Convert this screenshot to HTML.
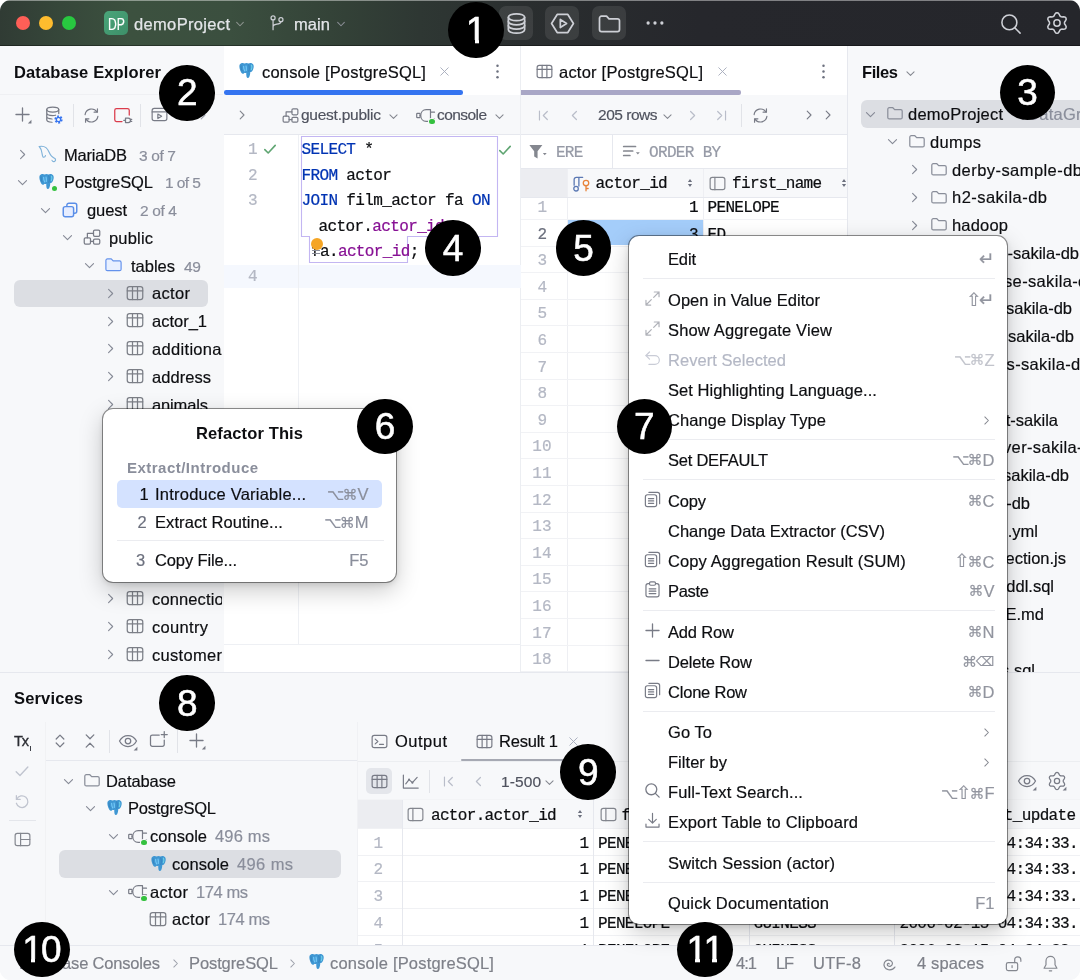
<!DOCTYPE html>
<html lang="en">
<head>
<meta charset="utf-8">
<title>DataGrip - demoProject</title>
<style>
*{box-sizing:border-box;margin:0;padding:0}
html,body{width:1080px;height:980px;overflow:hidden;background:#fff}
body{font-family:"Liberation Sans","DejaVu Sans",sans-serif;position:relative}
#win{position:absolute;left:0;top:0;width:1080px;height:980px;overflow:hidden;border-radius:11px;background:#f7f8fa;will-change:transform}
#win div,#win svg,#win .t{position:absolute}
.t{white-space:pre;display:block}
.s{font-family:"Liberation Sans","DejaVu Sans",sans-serif}
.m{font-family:"Liberation Mono","DejaVu Sans Mono",monospace}
svg{overflow:visible}
.badge{border-radius:50%;background:#000;z-index:50}
.bnum{z-index:51;font-kerning:none;color:#fff;white-space:pre;line-height:40px;font-family:"Liberation Sans","DejaVu Sans",sans-serif;-webkit-text-stroke:.55px #fff}
.bmask{z-index:52;background:#000}
.hl{border-radius:6px}
.menu{background:#fff;border-radius:10px;box-shadow:0 0 0 1px rgba(0,0,0,.42),0 8px 24px rgba(0,0,0,.22),0 2px 6px rgba(0,0,0,.12)}
.sep{background:#ebecf0;height:1px}
.m{-webkit-text-stroke:.22px currentColor}
.k{font-size:15px;margin-left:-1.9px;-webkit-text-stroke:.15px currentColor;position:relative;top:-.5px}
.k2{font-size:18.5px;margin-left:-2.5px;position:relative;top:-.5px;-webkit-text-stroke:.2px currentColor}
.k3{font-size:13px;margin-left:-1px;position:relative;top:-1.5px;-webkit-text-stroke:.2px currentColor}
.s{-webkit-text-stroke:.18px currentColor}
</style>
</head>
<body>
<div id="win">
<div style="left:0px;top:0px;width:1080px;height:46px;background:linear-gradient(90deg,#303b34 0px,#36473a 60px,#3c513f 130px,#3b4f3f 230px,#344338 330px,#2e3733 420px,#2a2e2f 520px,#26272c 700px,#25262b 1080px);"></div>
<div style="left:0px;top:0px;width:1080px;height:1px;background:rgba(255,255,255,.42);"></div>
<div style="left:0px;top:45px;width:1080px;height:1px;background:rgba(0,0,0,.35);"></div>
<div style="left:16px;top:16px;width:14px;height:14px;background:#fe5f57;border-radius:50%;"></div>
<div style="left:39px;top:16px;width:14px;height:14px;background:#febc2e;border-radius:50%;"></div>
<div style="left:62px;top:16px;width:14px;height:14px;background:#28c840;border-radius:50%;"></div>
<div style="left:104px;top:11px;width:24px;height:24px;border-radius:5px;background:linear-gradient(135deg,#4aa57a,#3d8f68);"></div>
<span class="t s" style="top:13.5px;font-size:16px;line-height:21px;color:#fff;left:107.5px;transform:scaleX(.76);transform-origin:0 50%;">DP</span>
<span class="t s" style="top:14px;font-size:16.5px;line-height:21px;color:#e3e5e8;left:134px;letter-spacing:0.34px;-webkit-text-stroke:.25px currentColor;">demoProject</span>
<svg style="left:233px;top:17px;" width="14" height="14" viewBox="0 0 16 16" fill="none"><path d="M4.2 6.2 8 10 11.8 6.2" stroke="#8e9490" stroke-width="1.2" stroke-linecap="round" stroke-linejoin="round"/></svg>
<svg style="left:268px;top:14px;" width="18" height="18" viewBox="0 0 16 16" fill="none"><circle cx="4.5" cy="3.5" r="1.8" stroke="#ced0d6" stroke-width="1.1" stroke-linecap="round" stroke-linejoin="round"/><circle cx="11.5" cy="5" r="1.8" stroke="#ced0d6" stroke-width="1.1" stroke-linecap="round" stroke-linejoin="round"/><path d="M4.5 5.3V14M4.5 11c0-2.6 7-1.2 7-4.2" stroke="#ced0d6" stroke-width="1.1" stroke-linecap="round" stroke-linejoin="round"/></svg>
<span class="t s" style="top:14px;font-size:16.5px;line-height:21px;color:#e3e5e8;left:294px;letter-spacing:0.08px;-webkit-text-stroke:.25px currentColor;">main</span>
<svg style="left:334px;top:17px;" width="14" height="14" viewBox="0 0 16 16" fill="none"><path d="M4.2 6.2 8 10 11.8 6.2" stroke="#8b8e96" stroke-width="1.2" stroke-linecap="round" stroke-linejoin="round"/></svg>
<div style="left:499px;top:6px;width:34px;height:34px;background:rgba(255,255,255,.09);border-radius:7px;"></div>
<svg style="left:503.5px;top:11px;" width="25" height="25" viewBox="0 0 16 16" fill="none"><ellipse cx="8" cy="4" rx="5.2" ry="2.2" stroke="#ced0d6" stroke-width="1.1" stroke-linecap="round" stroke-linejoin="round"/><path d="M2.8 4v8c0 1.2 2.3 2.2 5.2 2.2s5.2-1 5.2-2.2V4" stroke="#ced0d6" stroke-width="1.1" stroke-linecap="round" stroke-linejoin="round"/><path d="M2.8 6.7c0 1.2 2.3 2.2 5.2 2.2s5.2-1 5.2-2.2M2.8 9.4c0 1.2 2.3 2.2 5.2 2.2s5.2-1 5.2-2.2" stroke="#ced0d6" stroke-width="1.1" stroke-linecap="round" stroke-linejoin="round"/></svg>
<div style="left:545px;top:6px;width:34px;height:34px;background:rgba(255,255,255,.09);border-radius:7px;"></div>
<svg style="left:549.5px;top:11px;" width="25" height="25" viewBox="0 0 16 16" fill="none"><path d="M4.6 2.2h6.8L15 8l-3.6 5.8H4.6L1 8z" stroke="#ced0d6" stroke-width="1.1" stroke-linecap="round" stroke-linejoin="round"/><path d="M6.6 5.4 10.6 8 6.6 10.6z" stroke="#ced0d6" stroke-width="1.1" stroke-linecap="round" stroke-linejoin="round"/></svg>
<div style="left:592px;top:6px;width:34px;height:34px;background:rgba(255,255,255,.09);border-radius:7px;"></div>
<svg style="left:596.5px;top:11px;" width="25" height="25" viewBox="0 0 16 16" fill="none"><path d="M1.6 4.6a1.3 1.3 0 0 1 1.3-1.3h3.2l1.6 1.7h5.4a1.3 1.3 0 0 1 1.3 1.3v5.6a1.3 1.3 0 0 1-1.3 1.3H2.9a1.3 1.3 0 0 1-1.3-1.3z" fill="none" stroke="#ced0d6" stroke-width="1.1" stroke-linecap="round" stroke-linejoin="round"/></svg>
<svg style="left:644px;top:12px;" width="22" height="22" viewBox="0 0 16 16" fill="none"><circle cx="3" cy="8" r="1.2" fill="#ced0d6"/><circle cx="8" cy="8" r="1.2" fill="#ced0d6"/><circle cx="13" cy="8" r="1.2" fill="#ced0d6"/></svg>
<svg style="left:997.8px;top:10.8px;" width="26" height="26" viewBox="0 0 16 16" fill="none"><circle cx="7" cy="7" r="4.6" stroke="#ced0d6" stroke-width="0.95" stroke-linecap="round" stroke-linejoin="round"/><path d="M10.400 10.400 13.600 13.600" stroke="#ced0d6" stroke-width="0.95" stroke-linecap="round" stroke-linejoin="round"/></svg>
<svg style="left:1044.7px;top:11.3px;" width="24" height="24" viewBox="0 0 16 16" fill="none"><path d="M8.00 1.15L8.87 1.39L9.53 2.30L9.96 3.26L10.47 3.71L11.12 3.93L12.17 3.83L13.29 3.94L13.93 4.57L14.16 5.45L13.70 6.47L13.08 7.33L12.95 8.00L13.08 8.67L13.70 9.53L14.16 10.55L13.93 11.42L13.29 12.06L12.17 12.17L11.12 12.07L10.47 12.29L9.96 12.74L9.53 13.70L8.87 14.61L8.00 14.85L7.13 14.61L6.47 13.70L6.04 12.74L5.53 12.29L4.88 12.07L3.83 12.17L2.71 12.06L2.07 11.43L1.84 10.55L2.30 9.53L2.92 8.67L3.05 8.00L2.92 7.33L2.30 6.47L1.84 5.45L2.07 4.57L2.71 3.94L3.83 3.83L4.88 3.93L5.52 3.71L6.04 3.26L6.47 2.30L7.13 1.39z" stroke="#ced0d6" stroke-width="1.0" stroke-linecap="round" stroke-linejoin="round"/><circle cx="8" cy="8" r="2.1" stroke="#ced0d6" stroke-width="1.0" stroke-linecap="round" stroke-linejoin="round"/></svg>
<div style="left:0px;top:46px;width:224px;height:626px;background:#f7f8fa;"></div>
<span class="t s" style="top:61.5px;font-size:16.5px;line-height:21px;color:#0d0e11;font-weight:700;-webkit-text-stroke:0;left:14px;letter-spacing:0.13px;">Database Explorer</span>
<div style="left:0px;top:94px;width:223px;height:1px;background:#eff0f3;"></div>
<svg style="left:12.5px;top:104.5px;" width="19" height="19" viewBox="0 0 16 16" fill="none"><path d="M8 2.5V13.5M2.5 8H13.5" stroke="#787b86" stroke-width="1.1" stroke-linecap="round" stroke-linejoin="round"/><path d="M15.5 12.5V15.5H12.5z" fill="#787b86"/></svg>
<svg style="left:44px;top:105px;" width="20" height="20" viewBox="0 0 16 16" fill="none"><ellipse cx="7" cy="3.600" rx="4.800" ry="2" stroke="#787b86" stroke-width="1.0" stroke-linecap="round" stroke-linejoin="round"/><path d="M2.200 3.600v8.200c0 1 1.800 1.900 4.200 2M11.800 3.600v3.200M2.200 6.400c0 1.100 2.100 2 4.800 2 .8 0 1.600-.1 2.200-.2M2.200 9.200c0 1 1.800 1.800 4.200 2" stroke="#787b86" stroke-width="1.0" stroke-linecap="round" stroke-linejoin="round"/><circle cx="11.600" cy="11.600" r="2.600" stroke="#3574f0" stroke-width="1.400" stroke-dasharray="1.500 1.200"/><circle cx="11.600" cy="11.600" r="1.700" stroke="#3574f0" stroke-width="1"/></svg>
<div style="left:73px;top:104px;width:1px;height:23px;background:#e1e3e8;"></div>
<svg style="left:81.5px;top:105.5px;" width="19" height="19" viewBox="0 0 16 16" fill="none"><path d="M2.6 7.2A5.5 5.5 0 0 1 12.6 5M13.4 8.800A5.500 5.500 0 0 1 3.400 11" stroke="#787b86" stroke-width="1.0" stroke-linecap="round" stroke-linejoin="round"/><path d="M13 2.400V5.200H10.200M3 13.600V10.800H5.800" stroke="#787b86" stroke-width="1.0" stroke-linecap="round" stroke-linejoin="round"/></svg>
<svg style="left:112px;top:105px;" width="20" height="20" viewBox="0 0 16 16" fill="none"><path d="M13.800 8V4.200a1.400 1.400 0 0 0-1.400-1.400H3.600a1.400 1.400 0 0 0-1.400 1.400v7.600a1.400 1.400 0 0 0 1.400 1.400H8" stroke="#db3b4b" stroke-width="1.0" stroke-linecap="round" stroke-linejoin="round"/><path d="M9.400 12.200h1.400M10.800 10.400v3.600M10.800 10.400h2.200a1.800 1.800 0 0 1 0 3.600h-2.200M14.800 11.400h1M14.800 13h1" stroke="#787b86" stroke-width="1.0" stroke-linecap="round" stroke-linejoin="round"/></svg>
<div style="left:140px;top:104px;width:1px;height:23px;background:#e1e3e8;"></div>
<svg style="left:150.1px;top:105.3px;" width="19" height="19" viewBox="0 0 16 16" fill="none"><rect x="1.800" y="2.800" width="12.400" height="10.400" rx="1.800" stroke="#787b86" stroke-width="1.0" stroke-linecap="round" stroke-linejoin="round"/><path d="M1.800 5.800H14.200" stroke="#787b86" stroke-width="1.0" stroke-linecap="round" stroke-linejoin="round"/><path d="M6.600 7.600 9.800 9.500 6.600 11.400z" stroke="#787b86" stroke-width="1.0" stroke-linecap="round" stroke-linejoin="round"/></svg>
<svg style="left:195px;top:107px;" width="16" height="16" viewBox="0 0 16 16" fill="none"><path d="M6.2 4.2 10 8 6.2 11.8" stroke="#9da0ab" stroke-width="1.1" stroke-linecap="round" stroke-linejoin="round"/></svg>
<div style="left:0;top:136px;width:222px;height:536px;overflow:hidden">
<div style="left:0;top:-136px;width:222px;height:672px">
<svg style="left:13.5px;top:146px;" width="17" height="17" viewBox="0 0 16 16" fill="none"><path d="M6.2 4.2 10 8 6.2 11.8" stroke="#868a96" stroke-width="1.05" stroke-linecap="round" stroke-linejoin="round"/></svg>
<svg style="left:36.5px;top:143.7px;" width="20" height="20" viewBox="0 0 16 16" fill="none"><path d="M1.800 2C5.400 1.200 8.300 3.200 9.600 6.400c1 2.400 2.400 4.200 5 5.400M14.600 11.800c.4.900.2 1.800-.6 2.200-.9.300-1.700-.2-2-.9" stroke="#7fb2d9" stroke-width="0.9" stroke-linecap="round" stroke-linejoin="round"/><path d="M1.800 2c1.400 1.500 1.900 3.400 2.200 5.400.2 1.500.3 2.600 1 3.200M5 10.600c.9.100 1.600-.4 1.800-1.300" stroke="#7fb2d9" stroke-width="0.9" stroke-linecap="round" stroke-linejoin="round"/></svg>
<span class="t s" style="top:144.5px;font-size:16.5px;line-height:21px;color:#0d0e11;left:64px;letter-spacing:-0.20px;">MariaDB</span>
<span class="t s" style="top:145.5px;font-size:15.5px;line-height:20px;color:#8a8e9b;left:139px;letter-spacing:-0.36px;">3 of 7</span>
<svg style="left:13.5px;top:173.78px;" width="17" height="17" viewBox="0 0 16 16" fill="none"><path d="M4.2 6.2 8 10 11.8 6.2" stroke="#868a96" stroke-width="1.05" stroke-linecap="round" stroke-linejoin="round"/></svg>
<svg style="left:37px;top:172.28px;" width="19" height="19" viewBox="0 0 16 16" fill="none"><path d="M2.200 3.200C3 1.700 5 1.400 6.400 2.200 7.300 1.600 8.700 1.600 9.600 2.200c1.400-.8 3.400-.5 4.200 1 .6 1.200.2 3.400-.8 5-.5.9-1.200 1.300-1.800 1.100-.1 1.600-.3 3.200-1 4.400-.5.9-1.800.8-2.100-.2-.3-1-.3-2.400-.3-3.600-.5.3-1.200.3-1.700 0-.1.600-.700 1-1.400.8C3.200 10.300 1.400 5.200 2.200 3.200z" fill="#3f97d3"/><path d="M5.600 4.600c0 1.400.3 2.800.9 3.800M7.600 4.200c.3 1.200.4 2.600.2 3.800" stroke="#79cdfb" stroke-width="1" stroke-linecap="round" opacity=".9"/><path d="M9.900 3.200c.5 1.600.6 3.800.1 5.600M3.400 4c-.1 1.400.2 3 .8 4.200" stroke="#2c6da3" stroke-width=".7" stroke-linecap="round" opacity=".55"/><path d="M12.200 3.600c.5 1 .4 2.400-.1 3.600" stroke="#6fd3e8" stroke-width="1.100" stroke-linecap="round" opacity=".9"/></svg>
<div style="left:51.7px;top:185.78px;width:5.5px;height:5.5px;background:#35c13f;border-radius:50%;box-shadow:0 0 0 1px #f7f8fa;"></div>
<span class="t s" style="top:172.28px;font-size:16.5px;line-height:21px;color:#0d0e11;left:64px;letter-spacing:-0.10px;">PostgreSQL</span>
<span class="t s" style="top:173.28px;font-size:15.5px;line-height:20px;color:#8a8e9b;left:165px;letter-spacing:-0.56px;">1 of 5</span>
<svg style="left:36.5px;top:201.56px;" width="17" height="17" viewBox="0 0 16 16" fill="none"><path d="M4.2 6.2 8 10 11.8 6.2" stroke="#868a96" stroke-width="1.05" stroke-linecap="round" stroke-linejoin="round"/></svg>
<svg style="left:60.5px;top:201.06px;" width="18" height="18" viewBox="0 0 16 16" fill="none"><rect x="2" y="5" width="9.200" height="9" rx="1.800" fill="#e6edff" stroke="#5a8ee8" stroke-width="1.3" stroke-linecap="round" stroke-linejoin="round"/><path d="M5.200 4.600V3.800A1.800 1.800 0 0 1 7 2H12.200A1.800 1.800 0 0 1 14 3.800V9A1.800 1.800 0 0 1 12.200 10.800H11.600" stroke="#5a8ee8" stroke-width="1.3" stroke-linecap="round" stroke-linejoin="round"/></svg>
<span class="t s" style="top:200.06px;font-size:16.5px;line-height:21px;color:#0d0e11;left:87px;letter-spacing:-0.09px;">guest</span>
<span class="t s" style="top:201.06px;font-size:15.5px;line-height:20px;color:#8a8e9b;left:140px;letter-spacing:-0.36px;">2 of 4</span>
<svg style="left:58.5px;top:229.34px;" width="17" height="17" viewBox="0 0 16 16" fill="none"><path d="M4.2 6.2 8 10 11.8 6.2" stroke="#868a96" stroke-width="1.05" stroke-linecap="round" stroke-linejoin="round"/></svg>
<svg style="left:81.5px;top:227.04px;" width="20" height="20" viewBox="0 0 16 16" fill="none"><rect x="1.800" y="8.600" width="5" height="5" rx="1" stroke="#787b86" stroke-width="1.0" stroke-linecap="round" stroke-linejoin="round"/><rect x="9.200" y="2.400" width="5" height="5" rx="1" stroke="#787b86" stroke-width="1.0" stroke-linecap="round" stroke-linejoin="round"/><rect x="9.200" y="9.600" width="5" height="4" rx="1" stroke="#787b86" stroke-width="1.0" stroke-linecap="round" stroke-linejoin="round"/><path d="M4.300 8.600V5h4.900M6.800 11.400h2.400" stroke="#787b86" stroke-width="1.0" stroke-linecap="round" stroke-linejoin="round"/></svg>
<span class="t s" style="top:227.84px;font-size:16.5px;line-height:21px;color:#0d0e11;left:109px;letter-spacing:0.17px;">public</span>
<svg style="left:80.5px;top:257.12px;" width="17" height="17" viewBox="0 0 16 16" fill="none"><path d="M4.2 6.2 8 10 11.8 6.2" stroke="#868a96" stroke-width="1.05" stroke-linecap="round" stroke-linejoin="round"/></svg>
<svg style="left:104px;top:255.32px;" width="19" height="19" viewBox="0 0 16 16" fill="none"><path d="M1.6 4.6a1.3 1.3 0 0 1 1.3-1.3h3.2l1.6 1.7h5.4a1.3 1.3 0 0 1 1.3 1.3v5.6a1.3 1.3 0 0 1-1.3 1.3H2.9a1.3 1.3 0 0 1-1.3-1.3z" fill="#e8f0ff" stroke="#6492ec" stroke-width="1.0" stroke-linecap="round" stroke-linejoin="round"/></svg>
<span class="t s" style="top:255.62px;font-size:16.5px;line-height:21px;color:#0d0e11;left:131px;letter-spacing:-0.01px;">tables</span>
<span class="t s" style="top:256.62px;font-size:15.5px;line-height:20px;color:#8a8e9b;left:184px;letter-spacing:-0.25px;">49</span>
<div style="left:14px;top:280px;width:194px;height:27px;background:#dcdee3;border-radius:6px;"></div>
<svg style="left:101.5px;top:284.9px;" width="17" height="17" viewBox="0 0 16 16" fill="none"><path d="M6.2 4.2 10 8 6.2 11.8" stroke="#868a96" stroke-width="1.05" stroke-linecap="round" stroke-linejoin="round"/></svg>
<svg style="left:124.5px;top:282.6px;" width="20" height="20" viewBox="0 0 16 16" fill="none"><rect x="1.8" y="2.8" width="12.4" height="10.4" rx="1.8" stroke="#7c7f87" stroke-width="1.0" stroke-linecap="round" stroke-linejoin="round"/><path d="M1.8 6.2H14.2M6 2.8V13.2M10 2.8V13.2" stroke="#7c7f87" stroke-width="1.0" stroke-linecap="round" stroke-linejoin="round"/></svg>
<span class="t s" style="top:283.4px;font-size:16.5px;line-height:21px;color:#0d0e11;left:152px;letter-spacing:0.33px;">actor</span>
<svg style="left:101.5px;top:312.68px;" width="17" height="17" viewBox="0 0 16 16" fill="none"><path d="M6.2 4.2 10 8 6.2 11.8" stroke="#868a96" stroke-width="1.05" stroke-linecap="round" stroke-linejoin="round"/></svg>
<svg style="left:124.5px;top:310.38px;" width="20" height="20" viewBox="0 0 16 16" fill="none"><rect x="1.8" y="2.8" width="12.4" height="10.4" rx="1.8" stroke="#7c7f87" stroke-width="1.0" stroke-linecap="round" stroke-linejoin="round"/><path d="M1.8 6.2H14.2M6 2.8V13.2M10 2.8V13.2" stroke="#7c7f87" stroke-width="1.0" stroke-linecap="round" stroke-linejoin="round"/></svg>
<span class="t s" style="top:311.18px;font-size:16.5px;line-height:21px;color:#0d0e11;left:152px;letter-spacing:-0.01px;">actor_1</span>
<svg style="left:101.5px;top:340.46px;" width="17" height="17" viewBox="0 0 16 16" fill="none"><path d="M6.2 4.2 10 8 6.2 11.8" stroke="#868a96" stroke-width="1.05" stroke-linecap="round" stroke-linejoin="round"/></svg>
<svg style="left:124.5px;top:338.16px;" width="20" height="20" viewBox="0 0 16 16" fill="none"><rect x="1.8" y="2.8" width="12.4" height="10.4" rx="1.8" stroke="#7c7f87" stroke-width="1.0" stroke-linecap="round" stroke-linejoin="round"/><path d="M1.8 6.2H14.2M6 2.8V13.2M10 2.8V13.2" stroke="#7c7f87" stroke-width="1.0" stroke-linecap="round" stroke-linejoin="round"/></svg>
<span class="t s" style="top:338.96px;font-size:16.5px;line-height:21px;color:#0d0e11;left:152px;letter-spacing:0.32px;">additional</span>
<svg style="left:101.5px;top:368.24px;" width="17" height="17" viewBox="0 0 16 16" fill="none"><path d="M6.2 4.2 10 8 6.2 11.8" stroke="#868a96" stroke-width="1.05" stroke-linecap="round" stroke-linejoin="round"/></svg>
<svg style="left:124.5px;top:365.94px;" width="20" height="20" viewBox="0 0 16 16" fill="none"><rect x="1.8" y="2.8" width="12.4" height="10.4" rx="1.8" stroke="#7c7f87" stroke-width="1.0" stroke-linecap="round" stroke-linejoin="round"/><path d="M1.8 6.2H14.2M6 2.8V13.2M10 2.8V13.2" stroke="#7c7f87" stroke-width="1.0" stroke-linecap="round" stroke-linejoin="round"/></svg>
<span class="t s" style="top:366.74px;font-size:16.5px;line-height:21px;color:#0d0e11;left:152px;letter-spacing:0.05px;">address</span>
<svg style="left:101.5px;top:396.02px;" width="17" height="17" viewBox="0 0 16 16" fill="none"><path d="M6.2 4.2 10 8 6.2 11.8" stroke="#868a96" stroke-width="1.05" stroke-linecap="round" stroke-linejoin="round"/></svg>
<svg style="left:124.5px;top:393.72px;" width="20" height="20" viewBox="0 0 16 16" fill="none"><rect x="1.8" y="2.8" width="12.4" height="10.4" rx="1.8" stroke="#7c7f87" stroke-width="1.0" stroke-linecap="round" stroke-linejoin="round"/><path d="M1.8 6.2H14.2M6 2.8V13.2M10 2.8V13.2" stroke="#7c7f87" stroke-width="1.0" stroke-linecap="round" stroke-linejoin="round"/></svg>
<span class="t s" style="top:394.52px;font-size:16.5px;line-height:21px;color:#0d0e11;left:152px;letter-spacing:-0.14px;">animals</span>
<svg style="left:101.5px;top:590.48px;" width="17" height="17" viewBox="0 0 16 16" fill="none"><path d="M6.2 4.2 10 8 6.2 11.8" stroke="#868a96" stroke-width="1.05" stroke-linecap="round" stroke-linejoin="round"/></svg>
<svg style="left:124.5px;top:588.18px;" width="20" height="20" viewBox="0 0 16 16" fill="none"><rect x="1.8" y="2.8" width="12.4" height="10.4" rx="1.8" stroke="#7c7f87" stroke-width="1.0" stroke-linecap="round" stroke-linejoin="round"/><path d="M1.8 6.2H14.2M6 2.8V13.2M10 2.8V13.2" stroke="#7c7f87" stroke-width="1.0" stroke-linecap="round" stroke-linejoin="round"/></svg>
<span class="t s" style="top:588.98px;font-size:16.5px;line-height:21px;color:#0d0e11;left:152px;letter-spacing:0.13px;">connection</span>
<svg style="left:101.5px;top:618.26px;" width="17" height="17" viewBox="0 0 16 16" fill="none"><path d="M6.2 4.2 10 8 6.2 11.8" stroke="#868a96" stroke-width="1.05" stroke-linecap="round" stroke-linejoin="round"/></svg>
<svg style="left:124.5px;top:615.96px;" width="20" height="20" viewBox="0 0 16 16" fill="none"><rect x="1.8" y="2.8" width="12.4" height="10.4" rx="1.8" stroke="#7c7f87" stroke-width="1.0" stroke-linecap="round" stroke-linejoin="round"/><path d="M1.8 6.2H14.2M6 2.8V13.2M10 2.8V13.2" stroke="#7c7f87" stroke-width="1.0" stroke-linecap="round" stroke-linejoin="round"/></svg>
<span class="t s" style="top:616.76px;font-size:16.5px;line-height:21px;color:#0d0e11;left:152px;letter-spacing:0.32px;">country</span>
<svg style="left:101.5px;top:646.04px;" width="17" height="17" viewBox="0 0 16 16" fill="none"><path d="M6.2 4.2 10 8 6.2 11.8" stroke="#868a96" stroke-width="1.05" stroke-linecap="round" stroke-linejoin="round"/></svg>
<svg style="left:124.5px;top:643.74px;" width="20" height="20" viewBox="0 0 16 16" fill="none"><rect x="1.8" y="2.8" width="12.4" height="10.4" rx="1.8" stroke="#7c7f87" stroke-width="1.0" stroke-linecap="round" stroke-linejoin="round"/><path d="M1.8 6.2H14.2M6 2.8V13.2M10 2.8V13.2" stroke="#7c7f87" stroke-width="1.0" stroke-linecap="round" stroke-linejoin="round"/></svg>
<span class="t s" style="top:644.54px;font-size:16.5px;line-height:21px;color:#0d0e11;left:152px;letter-spacing:0.31px;">customer</span>
</div></div>
<div style="left:223.5px;top:46px;width:297px;height:626px;background:#fff;"></div>
<div style="left:223.5px;top:95px;width:297px;height:40px;background:#f7f8fa;"></div>
<div style="left:223.5px;top:134px;width:297px;height:1px;background:#e6e8ee;"></div>
<div style="left:520px;top:46px;width:1px;height:626px;background:#eceef2;"></div>
<svg style="left:236.5px;top:60.5px;" width="19" height="19" viewBox="0 0 16 16" fill="none"><path d="M2.200 3.200C3 1.700 5 1.400 6.400 2.200 7.300 1.600 8.700 1.600 9.600 2.200c1.400-.8 3.400-.5 4.200 1 .6 1.200.2 3.400-.8 5-.5.9-1.200 1.300-1.800 1.100-.1 1.600-.3 3.200-1 4.400-.5.9-1.800.8-2.100-.2-.3-1-.3-2.400-.3-3.600-.5.3-1.200.3-1.700 0-.1.600-.700 1-1.400.8C3.200 10.300 1.400 5.200 2.200 3.200z" fill="#3f97d3"/><path d="M5.600 4.600c0 1.400.3 2.800.9 3.800M7.600 4.200c.3 1.200.4 2.600.2 3.800" stroke="#79cdfb" stroke-width="1" stroke-linecap="round" opacity=".9"/><path d="M9.900 3.200c.5 1.600.6 3.800.1 5.600M3.400 4c-.1 1.400.2 3 .8 4.200" stroke="#2c6da3" stroke-width=".7" stroke-linecap="round" opacity=".55"/><path d="M12.200 3.600c.5 1 .4 2.400-.1 3.600" stroke="#6fd3e8" stroke-width="1.100" stroke-linecap="round" opacity=".9"/></svg>
<span class="t s" style="top:61.5px;font-size:16.5px;line-height:21px;color:#0d0e11;left:262px;letter-spacing:0.18px;">console [PostgreSQL]</span>
<svg style="left:436.5px;top:63.5px;" width="15" height="15" viewBox="0 0 16 16" fill="none"><path d="M4 4 12 12M12 4 4 12" stroke="#a8adbd" stroke-width="1.0" stroke-linecap="round" stroke-linejoin="round"/></svg>
<svg style="left:487.5px;top:61.5px;" width="19" height="19" viewBox="0 0 16 16" fill="none"><circle cx="8" cy="3.2" r="1.05" fill="#6c707e"/><circle cx="8" cy="8" r="1.05" fill="#6c707e"/><circle cx="8" cy="12.8" r="1.05" fill="#6c707e"/></svg>
<div style="left:224px;top:90px;width:239px;height:4.5px;background:#3574f0;border-radius:2.25px;"></div>
<svg style="left:234px;top:107px;" width="16" height="16" viewBox="0 0 16 16" fill="none"><path d="M6.2 4.2 10 8 6.2 11.8" stroke="#84878f" stroke-width="1.1" stroke-linecap="round" stroke-linejoin="round"/></svg>
<svg style="left:280.5px;top:105.5px;" width="19" height="19" viewBox="0 0 16 16" fill="none"><rect x="1.800" y="8.600" width="5" height="5" rx="1" stroke="#787b86" stroke-width="1.0" stroke-linecap="round" stroke-linejoin="round"/><rect x="9.200" y="2.400" width="5" height="5" rx="1" stroke="#787b86" stroke-width="1.0" stroke-linecap="round" stroke-linejoin="round"/><rect x="9.200" y="9.600" width="5" height="4" rx="1" stroke="#787b86" stroke-width="1.0" stroke-linecap="round" stroke-linejoin="round"/><path d="M4.300 8.600V5h4.900M6.800 11.400h2.400" stroke="#787b86" stroke-width="1.0" stroke-linecap="round" stroke-linejoin="round"/></svg>
<span class="t s" style="top:105px;font-size:15.5px;line-height:20px;color:#4f525e;left:301px;letter-spacing:-0.25px;">guest.public</span>
<svg style="left:385.5px;top:108.5px;" width="15" height="15" viewBox="0 0 16 16" fill="none"><path d="M4.2 6.2 8 10 11.8 6.2" stroke="#84878f" stroke-width="1.1" stroke-linecap="round" stroke-linejoin="round"/></svg>
<svg style="left:415.5px;top:106px;" width="19" height="19" viewBox="0 0 16 16" fill="none"><rect x=".6" y="6.200" width="2.800" height="3.600" rx=".5" stroke="#787b86" stroke-width="1.0" stroke-linecap="round" stroke-linejoin="round"/><path d="M3.400 8H4M8.600 3H12.200V13H8.600C5.800 13 4 10.800 4 8S5.800 3 8.600 3zM12.200 5.200H15.600M12.200 10.800H15.600" stroke="#787b86" stroke-width="1.0" stroke-linecap="round" stroke-linejoin="round"/></svg>
<div style="left:429.3px;top:118.9px;width:5.5px;height:5.5px;background:#35c13f;border-radius:50%;box-shadow:0 0 0 1px #f7f8fa;"></div>
<span class="t s" style="top:105px;font-size:15.5px;line-height:20px;color:#4f525e;left:437px;letter-spacing:-0.57px;">console</span>
<svg style="left:491.5px;top:108.5px;" width="15" height="15" viewBox="0 0 16 16" fill="none"><path d="M4.2 6.2 8 10 11.8 6.2" stroke="#84878f" stroke-width="1.1" stroke-linecap="round" stroke-linejoin="round"/></svg>
<div style="left:223.5px;top:264.5px;width:297px;height:23.5px;background:#f5f8fe;"></div>
<div style="left:298px;top:135px;width:1px;height:509px;background:#eef0f4;"></div>
<div style="left:223.5px;top:644px;width:297px;height:1px;background:#eef0f4;"></div>
<svg style="left:0;top:0" width="1080" height="980" viewBox="0 0 1080 980" fill="none"><path d="M301.500 136.500H497.500V236.500H407.500V262.500H309.500V236.500H301.500z" fill="#fff" stroke="#c3b6f2" stroke-width="1.100"/></svg>
<span class="t m" style="top:140px;font-size:16px;line-height:21px;color:#b4b8c4;left:248px;letter-spacing:-0.61px;">1</span>
<span class="t m" style="top:165.5px;font-size:16px;line-height:21px;color:#b4b8c4;left:248px;letter-spacing:-0.61px;">2</span>
<span class="t m" style="top:191px;font-size:16px;line-height:21px;color:#b4b8c4;left:248px;letter-spacing:-0.61px;">3</span>
<span class="t m" style="top:267px;font-size:16px;line-height:21px;color:#b4b8c4;left:248px;letter-spacing:-0.61px;">4</span>
<svg style="left:262px;top:141px;" width="16" height="16" viewBox="0 0 16 16" fill="none"><path d="M2.800 8.600 6.200 12 13.200 4.400" stroke="#5fa572" stroke-width="1.6" stroke-linecap="round" stroke-linejoin="round"/></svg>
<svg style="left:497px;top:142px;" width="16" height="16" viewBox="0 0 16 16" fill="none"><path d="M2.800 8.600 6.200 12 13.200 4.400" stroke="#5fa572" stroke-width="1.6" stroke-linecap="round" stroke-linejoin="round"/></svg>
<span class="t m" style="top:140px;font-size:16px;line-height:21px;color:#0033b3;left:301.5px;letter-spacing:-0.63px;">SELECT</span>
<span class="t m" style="top:140px;font-size:16px;line-height:21px;color:#0d0e11;left:355.32px;letter-spacing:-0.63px;"> *</span>
<span class="t m" style="top:165.5px;font-size:16px;line-height:21px;color:#0033b3;left:301.5px;letter-spacing:-0.63px;">FROM</span>
<span class="t m" style="top:165.5px;font-size:16px;line-height:21px;color:#0d0e11;left:337.38px;letter-spacing:-0.63px;"> actor</span>
<span class="t m" style="top:191px;font-size:16px;line-height:21px;color:#0033b3;left:301.5px;letter-spacing:-0.63px;">JOIN</span>
<span class="t m" style="top:191px;font-size:16px;line-height:21px;color:#0d0e11;left:337.38px;letter-spacing:-0.63px;"> film_actor fa </span>
<span class="t m" style="top:191px;font-size:16px;line-height:21px;color:#0033b3;left:471.93px;letter-spacing:-0.63px;">ON</span>
<span class="t m" style="top:216.5px;font-size:16px;line-height:21px;color:#0d0e11;left:318.5px;letter-spacing:-0.63px;">actor.</span>
<span class="t m" style="top:216.5px;font-size:16px;line-height:21px;color:#871094;left:372.32px;letter-spacing:-0.63px;">actor_id</span>
<span class="t m" style="top:216.5px;font-size:16px;line-height:21px;color:#0d0e11;left:444.08px;letter-spacing:-0.63px;"> =</span>
<span class="t m" style="top:242px;font-size:16px;line-height:21px;color:#0d0e11;left:311px;letter-spacing:-0.63px;">fa.</span>
<span class="t m" style="top:242px;font-size:16px;line-height:21px;color:#871094;left:337.91px;letter-spacing:-0.63px;">actor_id</span>
<span class="t m" style="top:242px;font-size:16px;line-height:21px;color:#0d0e11;left:409.67px;letter-spacing:-0.64px;">;</span>
<div style="left:310.5px;top:237.5px;width:12px;height:12px;background:#f5a524;border-radius:50%;"></div>
<div style="left:312px;top:249.5px;width:8px;height:1.5px;background:#8a8e9b;"></div>
<div style="left:312px;top:252.5px;width:8px;height:1.5px;background:#8a8e9b;"></div>
<div style="left:521px;top:46px;width:326px;height:626px;background:#fff;"></div>
<div style="left:521px;top:95px;width:326px;height:40px;background:#f7f8fa;"></div>
<div style="left:521px;top:134px;width:326px;height:1px;background:#e6e8ee;"></div>
<div style="left:847px;top:46px;width:1px;height:626px;background:#e6e8ee;"></div>
<svg style="left:534.5px;top:61.5px;" width="19" height="19" viewBox="0 0 16 16" fill="none"><rect x="1.8" y="2.8" width="12.4" height="10.4" rx="1.8" stroke="#787b86" stroke-width="1.0" stroke-linecap="round" stroke-linejoin="round"/><path d="M1.8 6.2H14.2M6 2.8V13.2M10 2.8V13.2" stroke="#787b86" stroke-width="1.0" stroke-linecap="round" stroke-linejoin="round"/></svg>
<span class="t s" style="top:61.5px;font-size:16.5px;line-height:21px;color:#0d0e11;left:559px;letter-spacing:0.22px;">actor [PostgreSQL]</span>
<svg style="left:714.5px;top:63.5px;" width="15" height="15" viewBox="0 0 16 16" fill="none"><path d="M4 4 12 12M12 4 4 12" stroke="#a8adbd" stroke-width="1.0" stroke-linecap="round" stroke-linejoin="round"/></svg>
<svg style="left:813.5px;top:61.5px;" width="19" height="19" viewBox="0 0 16 16" fill="none"><circle cx="8" cy="3.2" r="1.05" fill="#6c707e"/><circle cx="8" cy="8" r="1.05" fill="#6c707e"/><circle cx="8" cy="12.8" r="1.05" fill="#6c707e"/></svg>
<div style="left:521px;top:90px;width:220px;height:4.5px;background:#a9a7c6;border-radius:0 2px 2px 0;"></div>
<svg style="left:534.5px;top:106.5px;" width="17" height="17" viewBox="0 0 16 16" fill="none"><path d="M4.200 3.800V12.200M11.600 4.200 7.800 8 11.600 11.800" stroke="#b9bdc9" stroke-width="1.1" stroke-linecap="round" stroke-linejoin="round"/></svg>
<svg style="left:565.5px;top:106.5px;" width="17" height="17" viewBox="0 0 16 16" fill="none"><path d="M9.8 4.2 6 8 9.8 11.8" stroke="#b9bdc9" stroke-width="1.1" stroke-linecap="round" stroke-linejoin="round"/></svg>
<span class="t s" style="top:105px;font-size:15.5px;line-height:20px;color:#4f525e;left:598px;letter-spacing:-0.49px;">205 rows</span>
<svg style="left:659.5px;top:108.5px;" width="15" height="15" viewBox="0 0 16 16" fill="none"><path d="M4.2 6.2 8 10 11.8 6.2" stroke="#84878f" stroke-width="1.1" stroke-linecap="round" stroke-linejoin="round"/></svg>
<svg style="left:683.5px;top:106.5px;" width="17" height="17" viewBox="0 0 16 16" fill="none"><path d="M6.2 4.2 10 8 6.2 11.8" stroke="#b9bdc9" stroke-width="1.1" stroke-linecap="round" stroke-linejoin="round"/></svg>
<svg style="left:712.5px;top:106.5px;" width="17" height="17" viewBox="0 0 16 16" fill="none"><path d="M11.800 3.800V12.200M4.400 4.200 8.200 8 4.400 11.800" stroke="#b9bdc9" stroke-width="1.1" stroke-linecap="round" stroke-linejoin="round"/></svg>
<div style="left:741px;top:104px;width:1px;height:23px;background:#e1e3e8;"></div>
<svg style="left:750.5px;top:105.5px;" width="19" height="19" viewBox="0 0 16 16" fill="none"><path d="M2.6 7.2A5.5 5.5 0 0 1 12.6 5M13.4 8.800A5.500 5.500 0 0 1 3.400 11" stroke="#787b86" stroke-width="1.0" stroke-linecap="round" stroke-linejoin="round"/><path d="M13 2.400V5.200H10.200M3 13.600V10.800H5.800" stroke="#787b86" stroke-width="1.0" stroke-linecap="round" stroke-linejoin="round"/></svg>
<svg style="left:800.5px;top:107px;" width="16" height="16" viewBox="0 0 16 16" fill="none"><path d="M6.2 4.2 10 8 6.2 11.8" stroke="#787b86" stroke-width="1.1" stroke-linecap="round" stroke-linejoin="round"/></svg>
<svg style="left:819.5px;top:107px;" width="16" height="16" viewBox="0 0 16 16" fill="none"><path d="M6.2 4.2 10 8 6.2 11.8" stroke="#787b86" stroke-width="1.1" stroke-linecap="round" stroke-linejoin="round"/></svg>
<svg style="left:528px;top:142.5px;" width="18" height="18" viewBox="0 0 16 16" fill="none"><path d="M1.200 1.800h11.600l-4.300 5.600v6.400l-3-1.800V7.400z" fill="#84878f"/><path d="M13.200 8.800h3.400l-1.700 2z" fill="#84878f"/></svg>
<span class="t m" style="top:142.5px;font-size:16px;line-height:21px;color:#969aa6;left:556px;letter-spacing:-0.77px;">ERE</span>
<div style="left:612px;top:135px;width:1px;height:33px;background:#e6e8ee;"></div>
<svg style="left:622px;top:142px;" width="18" height="18" viewBox="0 0 16 16" fill="none"><path d="M1.500 4h10.500M1.500 8h8M1.500 12h5.500" stroke="#84878f" stroke-width="1.5" stroke-linecap="round" stroke-linejoin="round"/><path d="M12.400 9.200h3.400l-1.700 2z" fill="#84878f"/></svg>
<span class="t m" style="top:142.5px;font-size:16px;line-height:21px;color:#969aa6;left:649px;letter-spacing:-0.66px;">ORDER BY</span>
<div style="left:521px;top:168px;width:326px;height:1px;background:#e6e8ee;"></div>
<div style="left:521px;top:169px;width:326px;height:29px;background:#f7f8fa;"></div>
<div style="left:521px;top:169px;width:46px;height:29px;background:#ecedf1;"></div>
<svg style="left:571.5px;top:173.5px;" width="19" height="19" viewBox="0 0 16 16" fill="none"><path d="M9 2.800H3.600a1.800 1.800 0 0 0-1.800 1.800v4.800M5.800 2.800v7.400" stroke="#5b78b3" stroke-width="1.1" stroke-linecap="round" stroke-linejoin="round"/><circle cx="3.400" cy="12.400" r="1.900" stroke="#5b78b3" stroke-width="1.1" stroke-linecap="round" stroke-linejoin="round"/><circle cx="11.800" cy="7.600" r="2.300" stroke="#e8833a" stroke-width="1.1" stroke-linecap="round" stroke-linejoin="round"/><path d="M11.800 9.900v4.300M11.800 12.200h1.800" stroke="#e8833a" stroke-width="1.1" stroke-linecap="round" stroke-linejoin="round"/></svg>
<span class="t m" style="top:174px;font-size:16px;line-height:21px;color:#0d0e11;left:595.5px;letter-spacing:-0.66px;">actor_id</span>
<svg style="left:683px;top:176px;" width="14" height="14" viewBox="0 0 16 16" fill="none"><path d="M8 3.500 10.400 6.800H5.600zM8 12.500 5.600 9.200h4.800z" fill="#6c707e"/></svg>
<div style="left:703px;top:169px;width:1px;height:503px;background:#eeeff3;"></div>
<svg style="left:707.5px;top:173.5px;" width="19" height="19" viewBox="0 0 16 16" fill="none"><rect x="1.8" y="2.8" width="12.4" height="10.4" rx="1.8" stroke="#84878f" stroke-width="1.0" stroke-linecap="round" stroke-linejoin="round"/><path d="M5.8 2.8V13.2" stroke="#84878f" stroke-width="1.0" stroke-linecap="round" stroke-linejoin="round"/></svg>
<span class="t m" style="top:174px;font-size:16px;line-height:21px;color:#0d0e11;left:732px;letter-spacing:-0.65px;">first_name</span>
<svg style="left:837px;top:176px;" width="14" height="14" viewBox="0 0 16 16" fill="none"><path d="M8 3.500 10.400 6.800H5.600zM8 12.500 5.600 9.200h4.800z" fill="#6c707e"/></svg>
<div style="left:567px;top:169px;width:1px;height:503px;background:#eeeff3;"></div>
<div style="left:521px;top:197px;width:326px;height:1px;background:#e6e8ee;"></div>
<div style="left:568px;top:220px;width:135px;height:25px;background:#a4cdfa;"></div>
<span class="t m" style="top:198px;font-size:16px;line-height:21px;color:#b4b8c4;right:533px;">1</span>
<div style="left:521px;top:219px;width:326px;height:1px;background:#f1f2f5;"></div>
<span class="t m" style="top:224.6px;font-size:16px;line-height:21px;color:#6c707e;right:533px;">2</span>
<div style="left:521px;top:246px;width:326px;height:1px;background:#f1f2f5;"></div>
<span class="t m" style="top:251.2px;font-size:16px;line-height:21px;color:#b4b8c4;right:533px;">3</span>
<div style="left:521px;top:272px;width:326px;height:1px;background:#f1f2f5;"></div>
<span class="t m" style="top:277.8px;font-size:16px;line-height:21px;color:#b4b8c4;right:533px;">4</span>
<div style="left:521px;top:299px;width:326px;height:1px;background:#f1f2f5;"></div>
<span class="t m" style="top:304.4px;font-size:16px;line-height:21px;color:#b4b8c4;right:533px;">5</span>
<div style="left:521px;top:325px;width:326px;height:1px;background:#f1f2f5;"></div>
<span class="t m" style="top:331px;font-size:16px;line-height:21px;color:#b4b8c4;right:533px;">6</span>
<div style="left:521px;top:352px;width:326px;height:1px;background:#f1f2f5;"></div>
<span class="t m" style="top:357.6px;font-size:16px;line-height:21px;color:#b4b8c4;right:533px;">7</span>
<div style="left:521px;top:379px;width:326px;height:1px;background:#f1f2f5;"></div>
<span class="t m" style="top:384.2px;font-size:16px;line-height:21px;color:#b4b8c4;right:533px;">8</span>
<div style="left:521px;top:405px;width:326px;height:1px;background:#f1f2f5;"></div>
<span class="t m" style="top:410.8px;font-size:16px;line-height:21px;color:#b4b8c4;right:533px;">9</span>
<div style="left:521px;top:432px;width:326px;height:1px;background:#f1f2f5;"></div>
<span class="t m" style="top:437.4px;font-size:16px;line-height:21px;color:#b4b8c4;right:528.5px;">10</span>
<div style="left:521px;top:458px;width:326px;height:1px;background:#f1f2f5;"></div>
<span class="t m" style="top:464px;font-size:16px;line-height:21px;color:#b4b8c4;right:528.5px;">11</span>
<div style="left:521px;top:485px;width:326px;height:1px;background:#f1f2f5;"></div>
<span class="t m" style="top:490.6px;font-size:16px;line-height:21px;color:#b4b8c4;right:528.5px;">12</span>
<div style="left:521px;top:512px;width:326px;height:1px;background:#f1f2f5;"></div>
<span class="t m" style="top:517.2px;font-size:16px;line-height:21px;color:#b4b8c4;right:528.5px;">13</span>
<div style="left:521px;top:538px;width:326px;height:1px;background:#f1f2f5;"></div>
<span class="t m" style="top:543.8px;font-size:16px;line-height:21px;color:#b4b8c4;right:528.5px;">14</span>
<div style="left:521px;top:565px;width:326px;height:1px;background:#f1f2f5;"></div>
<span class="t m" style="top:570.4px;font-size:16px;line-height:21px;color:#b4b8c4;right:528.5px;">15</span>
<div style="left:521px;top:591px;width:326px;height:1px;background:#f1f2f5;"></div>
<span class="t m" style="top:597px;font-size:16px;line-height:21px;color:#b4b8c4;right:528.5px;">16</span>
<div style="left:521px;top:618px;width:326px;height:1px;background:#f1f2f5;"></div>
<span class="t m" style="top:623.6px;font-size:16px;line-height:21px;color:#b4b8c4;right:528.5px;">17</span>
<div style="left:521px;top:645px;width:326px;height:1px;background:#f1f2f5;"></div>
<span class="t m" style="top:650.2px;font-size:16px;line-height:21px;color:#b4b8c4;right:528.5px;">18</span>
<div style="left:521px;top:671px;width:326px;height:1px;background:#f1f2f5;"></div>
<span class="t m" style="top:198px;font-size:16px;line-height:21px;color:#0d0e11;right:381.5px;">1</span>
<span class="t m" style="top:198px;font-size:16px;line-height:21px;color:#0d0e11;left:707.5px;letter-spacing:-0.66px;">PENELOPE</span>
<span class="t m" style="top:224.5px;font-size:16px;line-height:21px;color:#0d0e11;right:381.5px;">3</span>
<span class="t m" style="top:224.5px;font-size:16px;line-height:21px;color:#0d0e11;left:707.5px;letter-spacing:-0.60px;">ED</span>
<div style="left:848px;top:46px;width:232px;height:626px;background:#f7f8fa;"></div>
<span class="t s" style="top:61.5px;font-size:16.5px;line-height:21px;color:#0d0e11;font-weight:700;-webkit-text-stroke:0;left:862px;letter-spacing:-0.40px;">Files</span>
<svg style="left:902.5px;top:65.5px;" width="15" height="15" viewBox="0 0 16 16" fill="none"><path d="M4.2 6.2 8 10 11.8 6.2" stroke="#84878f" stroke-width="1.1" stroke-linecap="round" stroke-linejoin="round"/></svg>
<div style="left:861px;top:100px;width:230px;height:28px;background:#dcdee3;border-radius:6px;"></div>
<svg style="left:861.5px;top:105.5px;" width="17" height="17" viewBox="0 0 16 16" fill="none"><path d="M4.2 6.2 8 10 11.8 6.2" stroke="#868a96" stroke-width="1.05" stroke-linecap="round" stroke-linejoin="round"/></svg>
<svg style="left:885.5px;top:104.3px;" width="18" height="18" viewBox="0 0 16 16" fill="none"><path d="M1.6 4.6a1.3 1.3 0 0 1 1.3-1.3h3.2l1.6 1.7h5.4a1.3 1.3 0 0 1 1.3 1.3v5.6a1.3 1.3 0 0 1-1.3 1.3H2.9a1.3 1.3 0 0 1-1.3-1.3z" fill="none" stroke="#8a8e9a" stroke-width="1.1" stroke-linecap="round" stroke-linejoin="round"/></svg>
<span class="t s" style="top:104px;font-size:16.5px;line-height:21px;color:#0d0e11;left:908px;letter-spacing:0.24px;">demoProject</span>
<span class="t s" style="top:104px;font-size:16.5px;line-height:21px;color:#8a8e9b;left:1012.5px;letter-spacing:0.23px;">~/DataGr</span>
<svg style="left:884px;top:133.28px;" width="17" height="17" viewBox="0 0 16 16" fill="none"><path d="M4.2 6.2 8 10 11.8 6.2" stroke="#868a96" stroke-width="1.05" stroke-linecap="round" stroke-linejoin="round"/></svg>
<svg style="left:908px;top:132.08px;" width="18" height="18" viewBox="0 0 16 16" fill="none"><path d="M1.6 4.6a1.3 1.3 0 0 1 1.3-1.3h3.2l1.6 1.7h5.4a1.3 1.3 0 0 1 1.3 1.3v5.6a1.3 1.3 0 0 1-1.3 1.3H2.9a1.3 1.3 0 0 1-1.3-1.3z" fill="none" stroke="#8a8e9a" stroke-width="1.1" stroke-linecap="round" stroke-linejoin="round"/></svg>
<span class="t s" style="top:131.78px;font-size:16.5px;line-height:21px;color:#0d0e11;left:930px;letter-spacing:0.37px;">dumps</span>
<svg style="left:905.5px;top:161.06px;" width="17" height="17" viewBox="0 0 16 16" fill="none"><path d="M6.2 4.2 10 8 6.2 11.8" stroke="#868a96" stroke-width="1.05" stroke-linecap="round" stroke-linejoin="round"/></svg>
<svg style="left:929.5px;top:159.86px;" width="18" height="18" viewBox="0 0 16 16" fill="none"><path d="M1.6 4.6a1.3 1.3 0 0 1 1.3-1.3h3.2l1.6 1.7h5.4a1.3 1.3 0 0 1 1.3 1.3v5.6a1.3 1.3 0 0 1-1.3 1.3H2.9a1.3 1.3 0 0 1-1.3-1.3z" fill="none" stroke="#8a8e9a" stroke-width="1.1" stroke-linecap="round" stroke-linejoin="round"/></svg>
<span class="t s" style="top:159.56px;font-size:16.5px;line-height:21px;color:#0d0e11;left:952px;letter-spacing:0.44px;">derby-sample-db</span>
<svg style="left:905.5px;top:188.84px;" width="17" height="17" viewBox="0 0 16 16" fill="none"><path d="M6.2 4.2 10 8 6.2 11.8" stroke="#868a96" stroke-width="1.05" stroke-linecap="round" stroke-linejoin="round"/></svg>
<svg style="left:929.5px;top:187.64px;" width="18" height="18" viewBox="0 0 16 16" fill="none"><path d="M1.6 4.6a1.3 1.3 0 0 1 1.3-1.3h3.2l1.6 1.7h5.4a1.3 1.3 0 0 1 1.3 1.3v5.6a1.3 1.3 0 0 1-1.3 1.3H2.9a1.3 1.3 0 0 1-1.3-1.3z" fill="none" stroke="#8a8e9a" stroke-width="1.1" stroke-linecap="round" stroke-linejoin="round"/></svg>
<span class="t s" style="top:187.34px;font-size:16.5px;line-height:21px;color:#0d0e11;left:952px;letter-spacing:0.46px;">h2-sakila-db</span>
<svg style="left:905.5px;top:216.62px;" width="17" height="17" viewBox="0 0 16 16" fill="none"><path d="M6.2 4.2 10 8 6.2 11.8" stroke="#868a96" stroke-width="1.05" stroke-linecap="round" stroke-linejoin="round"/></svg>
<svg style="left:929.5px;top:215.42px;" width="18" height="18" viewBox="0 0 16 16" fill="none"><path d="M1.6 4.6a1.3 1.3 0 0 1 1.3-1.3h3.2l1.6 1.7h5.4a1.3 1.3 0 0 1 1.3 1.3v5.6a1.3 1.3 0 0 1-1.3 1.3H2.9a1.3 1.3 0 0 1-1.3-1.3z" fill="none" stroke="#8a8e9a" stroke-width="1.1" stroke-linecap="round" stroke-linejoin="round"/></svg>
<span class="t s" style="top:215.12px;font-size:16.5px;line-height:21px;color:#0d0e11;left:952px;letter-spacing:0.19px;">hadoop</span>
<span class="t s" style="top:242.9px;font-size:16.5px;line-height:21px;color:#0d0e11;right:1px;">-sakila-db</span>
<span class="t s" style="top:298.46px;font-size:16.5px;line-height:21px;color:#0d0e11;right:8px;">sakila-db</span>
<span class="t s" style="top:326.24px;font-size:16.5px;line-height:21px;color:#0d0e11;right:6px;">sakila-db</span>
<span class="t s" style="top:409.58px;font-size:16.5px;line-height:21px;color:#0d0e11;right:22px;">t-sakila</span>
<span class="t s" style="top:465.14px;font-size:16.5px;line-height:21px;color:#0d0e11;right:11px;">sakila-db</span>
<span class="t s" style="top:492.92px;font-size:16.5px;line-height:21px;color:#0d0e11;right:50px;">-db</span>
<span class="t s" style="top:520.7px;font-size:16.5px;line-height:21px;color:#0d0e11;right:42px;">e.yml</span>
<span class="t s" style="top:548.48px;font-size:16.5px;line-height:21px;color:#0d0e11;right:14px;">lection.js</span>
<span class="t s" style="top:576.26px;font-size:16.5px;line-height:21px;color:#0d0e11;right:26px;">-ddl.sql</span>
<span class="t s" style="top:604.04px;font-size:16.5px;line-height:21px;color:#0d0e11;right:36px;">ME.md</span>
<span class="t s" style="top:270.68px;font-size:16.5px;line-height:21px;color:#0d0e11;left:1004px;letter-spacing:.35px;">se-sakila-db</span>
<span class="t s" style="top:354.02px;font-size:16.5px;line-height:21px;color:#0d0e11;left:997px;letter-spacing:.35px;">es-sakila-db</span>
<span class="t s" style="top:437.36px;font-size:16.5px;line-height:21px;color:#0d0e11;left:1003px;letter-spacing:.35px;">ver-sakila-db</span>
<div style="left:848px;top:650px;width:232px;height:22px;overflow:hidden">
<span class="t s" style="top:9.5px;font-size:16.5px;line-height:21px;color:#0d0e11;right:45px;right:45px;">s.sql</span>
</div>
<div style="left:0px;top:672px;width:1080px;height:273px;background:#f7f8fa;"></div>
<div style="left:0px;top:672px;width:1080px;height:1px;background:#e6e8ee;"></div>
<span class="t s" style="top:687.5px;font-size:16.5px;line-height:21px;color:#0d0e11;font-weight:700;-webkit-text-stroke:0;left:14px;letter-spacing:0.16px;">Services</span>
<span class="t s" style="top:732px;font-size:14.5px;line-height:19px;color:#2b2d33;left:14px;letter-spacing:-1.11px;-webkit-text-stroke:.35px currentColor;">Tx</span>
<div style="left:29.5px;top:746px;width:1.3px;height:5px;background:#3d4048;"></div>
<svg style="left:13px;top:762px;" width="18" height="18" viewBox="0 0 16 16" fill="none"><path d="M2.800 8.600 6.200 12 13.200 4.400" stroke="#c0c4cf" stroke-width="1.2" stroke-linecap="round" stroke-linejoin="round"/></svg>
<svg style="left:13px;top:792px;" width="18" height="18" viewBox="0 0 16 16" fill="none"><path d="M3 3.200V6.600H6.400" stroke="#c0c4cf" stroke-width="1.1" stroke-linecap="round" stroke-linejoin="round"/><path d="M3.300 6.400A5.200 5.200 0 1 1 3 10" stroke="#c0c4cf" stroke-width="1.1" stroke-linecap="round" stroke-linejoin="round"/></svg>
<div style="left:9px;top:820px;width:27px;height:1px;background:#e4e6eb;"></div>
<svg style="left:12.5px;top:830px;" width="19" height="19" viewBox="0 0 16 16" fill="none"><rect x="1.800" y="2.800" width="12.400" height="10.400" rx="1.800" stroke="#84878f" stroke-width="1.0" stroke-linecap="round" stroke-linejoin="round"/><path d="M6.400 2.800V13.200M6.400 8H14.200" stroke="#84878f" stroke-width="1.0" stroke-linecap="round" stroke-linejoin="round"/></svg>
<div style="left:45px;top:722px;width:1px;height:223px;background:#f1f2f4;"></div>
<svg style="left:51px;top:732px;" width="18" height="18" viewBox="0 0 16 16" fill="none"><path d="M4.600 6.200 8 2.800 11.400 6.200M4.600 9.800 8 13.200 11.400 9.800" stroke="#787b86" stroke-width="1.1" stroke-linecap="round" stroke-linejoin="round"/></svg>
<svg style="left:81px;top:732px;" width="18" height="18" viewBox="0 0 16 16" fill="none"><path d="M4.600 2.600 8 6 11.400 2.600M4.600 13.400 8 10 11.400 13.400" stroke="#787b86" stroke-width="1.1" stroke-linecap="round" stroke-linejoin="round"/></svg>
<div style="left:109px;top:730px;width:1px;height:23px;background:#e1e3e8;"></div>
<svg style="left:118px;top:731px;" width="20" height="20" viewBox="0 0 16 16" fill="none"><path d="M1.200 8C2.800 5 5.200 3.600 8 3.600S13.200 5 14.800 8C13.200 11 10.800 12.400 8 12.400S2.800 11 1.200 8z" stroke="#787b86" stroke-width="1.0" stroke-linecap="round" stroke-linejoin="round"/><circle cx="8" cy="8" r="2.200" stroke="#787b86" stroke-width="1.0" stroke-linecap="round" stroke-linejoin="round"/><path d="M15.5 12.5V15.5H12.5z" fill="#787b86"/></svg>
<svg style="left:148px;top:730px;" width="20" height="20" viewBox="0 0 16 16" fill="none"><path d="M9 4H3.400A1.400 1.400 0 0 0 2 5.400v6.200A1.400 1.400 0 0 0 3.400 13h8.200a1.400 1.400 0 0 0 1.400-1.400V8" stroke="#787b86" stroke-width="1.0" stroke-linecap="round" stroke-linejoin="round"/><path d="M13 1.200V6M10.600 3.600h4.800" stroke="#787b86" stroke-width="1.0" stroke-linecap="round" stroke-linejoin="round"/></svg>
<div style="left:177px;top:730px;width:1px;height:23px;background:#e1e3e8;"></div>
<svg style="left:186.5px;top:730.5px;" width="19" height="19" viewBox="0 0 16 16" fill="none"><path d="M8 2.5V13.5M2.5 8H13.5" stroke="#787b86" stroke-width="1.1" stroke-linecap="round" stroke-linejoin="round"/><path d="M15.5 12.5V15.5H12.5z" fill="#787b86"/></svg>
<div style="left:46px;top:760px;width:311px;height:1px;background:#e6e8ee;"></div>
<div style="left:357px;top:722px;width:1px;height:223px;background:#f0f1f4;"></div>
<div style="left:59px;top:850px;width:282px;height:28px;background:#dcdee3;border-radius:6px;"></div>
<svg style="left:59.5px;top:772.5px;" width="17" height="17" viewBox="0 0 16 16" fill="none"><path d="M4.2 6.2 8 10 11.8 6.2" stroke="#868a96" stroke-width="1.05" stroke-linecap="round" stroke-linejoin="round"/></svg>
<svg style="left:83px;top:770.8px;" width="18" height="18" viewBox="0 0 16 16" fill="none"><path d="M1.6 4.6a1.3 1.3 0 0 1 1.3-1.3h3.2l1.6 1.7h5.4a1.3 1.3 0 0 1 1.3 1.3v5.6a1.3 1.3 0 0 1-1.3 1.3H2.9a1.3 1.3 0 0 1-1.3-1.3z" fill="none" stroke="#8a8e9a" stroke-width="1.1" stroke-linecap="round" stroke-linejoin="round"/></svg>
<span class="t s" style="top:770.5px;font-size:16.5px;line-height:21px;color:#0d0e11;left:106px;letter-spacing:-0.09px;">Database</span>
<svg style="left:81.5px;top:800.28px;" width="17" height="17" viewBox="0 0 16 16" fill="none"><path d="M4.2 6.2 8 10 11.8 6.2" stroke="#868a96" stroke-width="1.05" stroke-linecap="round" stroke-linejoin="round"/></svg>
<svg style="left:104.5px;top:798.28px;" width="19" height="19" viewBox="0 0 16 16" fill="none"><path d="M2.200 3.200C3 1.700 5 1.400 6.400 2.200 7.300 1.600 8.700 1.600 9.600 2.200c1.400-.8 3.400-.5 4.200 1 .6 1.200.2 3.400-.8 5-.5.9-1.200 1.300-1.800 1.100-.1 1.600-.3 3.200-1 4.400-.5.9-1.800.8-2.100-.2-.3-1-.3-2.400-.3-3.600-.5.3-1.200.3-1.700 0-.1.600-.700 1-1.400.8C3.200 10.300 1.400 5.200 2.200 3.200z" fill="#3f97d3"/><path d="M5.600 4.600c0 1.400.3 2.800.9 3.800M7.600 4.200c.3 1.200.4 2.600.2 3.800" stroke="#79cdfb" stroke-width="1" stroke-linecap="round" opacity=".9"/><path d="M9.900 3.200c.5 1.600.6 3.800.1 5.600M3.400 4c-.1 1.400.2 3 .8 4.200" stroke="#2c6da3" stroke-width=".7" stroke-linecap="round" opacity=".55"/><path d="M12.200 3.600c.5 1 .4 2.400-.1 3.600" stroke="#6fd3e8" stroke-width="1.100" stroke-linecap="round" opacity=".9"/></svg>
<span class="t s" style="top:798.28px;font-size:16.5px;line-height:21px;color:#0d0e11;left:128px;letter-spacing:-0.21px;">PostgreSQL</span>
<svg style="left:104.5px;top:828.06px;" width="17" height="17" viewBox="0 0 16 16" fill="none"><path d="M4.2 6.2 8 10 11.8 6.2" stroke="#868a96" stroke-width="1.05" stroke-linecap="round" stroke-linejoin="round"/></svg>
<svg style="left:127.5px;top:826.56px;" width="19" height="19" viewBox="0 0 16 16" fill="none"><rect x=".6" y="6.200" width="2.800" height="3.600" rx=".5" stroke="#787b86" stroke-width="1.0" stroke-linecap="round" stroke-linejoin="round"/><path d="M3.400 8H4M8.600 3H12.200V13H8.600C5.800 13 4 10.800 4 8S5.800 3 8.600 3zM12.200 5.200H15.600M12.200 10.800H15.600" stroke="#787b86" stroke-width="1.0" stroke-linecap="round" stroke-linejoin="round"/></svg>
<div style="left:141.3px;top:839.9599999999999px;width:5.5px;height:5.5px;background:#35c13f;border-radius:50%;box-shadow:0 0 0 1px #f7f8fa;"></div>
<span class="t s" style="top:826.06px;font-size:16.5px;line-height:21px;color:#0d0e11;left:150px;letter-spacing:0.02px;">console</span>
<span class="t s" style="top:826.06px;font-size:16.5px;line-height:21px;color:#8a8e9b;left:215px;letter-spacing:0.18px;">496 ms</span>
<svg style="left:148.5px;top:853.84px;" width="19" height="19" viewBox="0 0 16 16" fill="none"><path d="M2.200 3.200C3 1.700 5 1.400 6.400 2.200 7.300 1.600 8.700 1.600 9.600 2.200c1.400-.8 3.400-.5 4.200 1 .6 1.200.2 3.400-.8 5-.5.9-1.200 1.300-1.800 1.100-.1 1.600-.3 3.200-1 4.400-.5.9-1.800.8-2.100-.2-.3-1-.3-2.400-.3-3.600-.5.3-1.200.3-1.700 0-.1.600-.700 1-1.400.8C3.200 10.300 1.400 5.200 2.200 3.200z" fill="#3f97d3"/><path d="M5.600 4.600c0 1.400.3 2.800.9 3.800M7.600 4.200c.3 1.200.4 2.600.2 3.800" stroke="#79cdfb" stroke-width="1" stroke-linecap="round" opacity=".9"/><path d="M9.900 3.200c.5 1.600.6 3.800.1 5.600M3.400 4c-.1 1.400.2 3 .8 4.200" stroke="#2c6da3" stroke-width=".7" stroke-linecap="round" opacity=".55"/><path d="M12.200 3.600c.5 1 .4 2.400-.1 3.600" stroke="#6fd3e8" stroke-width="1.100" stroke-linecap="round" opacity=".9"/></svg>
<span class="t s" style="top:853.84px;font-size:16.5px;line-height:21px;color:#0d0e11;left:172px;letter-spacing:0.02px;">console</span>
<span class="t s" style="top:853.84px;font-size:16.5px;line-height:21px;color:#8a8e9b;left:237px;letter-spacing:0.38px;">496 ms</span>
<svg style="left:104.5px;top:883.62px;" width="17" height="17" viewBox="0 0 16 16" fill="none"><path d="M4.2 6.2 8 10 11.8 6.2" stroke="#868a96" stroke-width="1.05" stroke-linecap="round" stroke-linejoin="round"/></svg>
<svg style="left:127.5px;top:882.12px;" width="19" height="19" viewBox="0 0 16 16" fill="none"><rect x=".6" y="6.200" width="2.800" height="3.600" rx=".5" stroke="#787b86" stroke-width="1.0" stroke-linecap="round" stroke-linejoin="round"/><path d="M3.400 8H4M8.600 3H12.200V13H8.600C5.800 13 4 10.800 4 8S5.800 3 8.600 3zM12.200 5.200H15.600M12.200 10.800H15.600" stroke="#787b86" stroke-width="1.0" stroke-linecap="round" stroke-linejoin="round"/></svg>
<div style="left:141.3px;top:895.52px;width:5.5px;height:5.5px;background:#35c13f;border-radius:50%;box-shadow:0 0 0 1px #f7f8fa;"></div>
<span class="t s" style="top:881.62px;font-size:16.5px;line-height:21px;color:#0d0e11;left:150px;letter-spacing:0.33px;">actor</span>
<span class="t s" style="top:881.62px;font-size:16.5px;line-height:21px;color:#8a8e9b;left:196px;letter-spacing:-0.42px;">174 ms</span>
<svg style="left:148px;top:908.9px;" width="20" height="20" viewBox="0 0 16 16" fill="none"><rect x="1.8" y="2.8" width="12.4" height="10.4" rx="1.8" stroke="#7c7f87" stroke-width="1.0" stroke-linecap="round" stroke-linejoin="round"/><path d="M1.8 6.2H14.2M6 2.8V13.2M10 2.8V13.2" stroke="#7c7f87" stroke-width="1.0" stroke-linecap="round" stroke-linejoin="round"/></svg>
<span class="t s" style="top:909.4px;font-size:16.5px;line-height:21px;color:#0d0e11;left:172px;letter-spacing:0.33px;">actor</span>
<span class="t s" style="top:909.4px;font-size:16.5px;line-height:21px;color:#8a8e9b;left:218px;letter-spacing:-0.42px;">174 ms</span>
<div style="left:358px;top:722px;width:722px;height:223px;background:#f7f8fa;"></div>
<svg style="left:369.5px;top:731.5px;" width="19" height="19" viewBox="0 0 16 16" fill="none"><rect x="1.800" y="2.800" width="12.400" height="10.400" rx="1.800" stroke="#787b86" stroke-width="1.0" stroke-linecap="round" stroke-linejoin="round"/><path d="M4.400 6 6.600 8 4.400 10M8 10.400h3.400" stroke="#787b86" stroke-width="1.0" stroke-linecap="round" stroke-linejoin="round"/></svg>
<span class="t s" style="top:731px;font-size:16.5px;line-height:21px;color:#0d0e11;left:395px;letter-spacing:0.49px;">Output</span>
<svg style="left:474.5px;top:731.5px;" width="19" height="19" viewBox="0 0 16 16" fill="none"><rect x="1.8" y="2.8" width="12.4" height="10.4" rx="1.8" stroke="#787b86" stroke-width="1.0" stroke-linecap="round" stroke-linejoin="round"/><path d="M1.8 6.2H14.2M6 2.8V13.2M10 2.8V13.2" stroke="#787b86" stroke-width="1.0" stroke-linecap="round" stroke-linejoin="round"/></svg>
<span class="t s" style="top:731px;font-size:16.5px;line-height:21px;color:#0d0e11;left:499px;letter-spacing:-0.22px;">Result 1</span>
<svg style="left:565.5px;top:733.5px;" width="15" height="15" viewBox="0 0 16 16" fill="none"><path d="M4 4 12 12M12 4 4 12" stroke="#a8adbd" stroke-width="1.0" stroke-linecap="round" stroke-linejoin="round"/></svg>
<div style="left:461px;top:758.5px;width:121px;height:2.5px;background:#a6a9b3;border-radius:1.5px;"></div>
<div style="left:358px;top:761px;width:722px;height:1px;background:#eceef1;"></div>
<div style="left:366px;top:768px;width:26px;height:26px;background:#e4e6eb;border-radius:5px;"></div>
<svg style="left:369.5px;top:771.5px;" width="19" height="19" viewBox="0 0 16 16" fill="none"><rect x="1.8" y="2.8" width="12.4" height="10.4" rx="1.8" stroke="#787b86" stroke-width="1.0" stroke-linecap="round" stroke-linejoin="round"/><path d="M1.8 6.2H14.2M6 2.8V13.2M10 2.8V13.2" stroke="#787b86" stroke-width="1.0" stroke-linecap="round" stroke-linejoin="round"/></svg>
<svg style="left:400.5px;top:771.5px;" width="19" height="19" viewBox="0 0 16 16" fill="none"><path d="M2 2.500V13.500H14.500" stroke="#787b86" stroke-width="1.0" stroke-linecap="round" stroke-linejoin="round"/><path d="M4 10 6.800 6.400 9.600 9 13.600 4.600" stroke="#787b86" stroke-width="1.0" stroke-linecap="round" stroke-linejoin="round"/><circle cx="6.800" cy="6.400" r=".9" fill="#787b86"/><circle cx="9.600" cy="9" r=".9" fill="#787b86"/></svg>
<div style="left:429px;top:770px;width:1px;height:23px;background:#e1e3e8;"></div>
<svg style="left:439.5px;top:772.5px;" width="17" height="17" viewBox="0 0 16 16" fill="none"><path d="M4.200 3.800V12.200M11.600 4.200 7.800 8 11.600 11.800" stroke="#b9bdc9" stroke-width="1.1" stroke-linecap="round" stroke-linejoin="round"/></svg>
<svg style="left:469.5px;top:772.5px;" width="17" height="17" viewBox="0 0 16 16" fill="none"><path d="M9.8 4.2 6 8 9.8 11.8" stroke="#b9bdc9" stroke-width="1.1" stroke-linecap="round" stroke-linejoin="round"/></svg>
<span class="t s" style="top:771.5px;font-size:15.5px;line-height:20px;color:#4f525e;left:501px;letter-spacing:0.09px;">1-500</span>
<svg style="left:541.5px;top:774.5px;" width="15" height="15" viewBox="0 0 16 16" fill="none"><path d="M4.2 6.2 8 10 11.8 6.2" stroke="#84878f" stroke-width="1.1" stroke-linecap="round" stroke-linejoin="round"/></svg>
<svg style="left:1017px;top:771px;" width="20" height="20" viewBox="0 0 16 16" fill="none"><path d="M1.200 8C2.800 5 5.200 3.600 8 3.600S13.200 5 14.800 8C13.200 11 10.800 12.400 8 12.400S2.800 11 1.200 8z" stroke="#787b86" stroke-width="1.0" stroke-linecap="round" stroke-linejoin="round"/><circle cx="8" cy="8" r="2.200" stroke="#787b86" stroke-width="1.0" stroke-linecap="round" stroke-linejoin="round"/><path d="M15.5 12.5V15.5H12.5z" fill="#787b86"/></svg>
<svg style="left:1047px;top:771px;" width="20" height="20" viewBox="0 0 16 16" fill="none"><path d="M8.00 1.15L8.87 1.39L9.53 2.30L9.96 3.26L10.47 3.71L11.12 3.93L12.17 3.83L13.29 3.94L13.93 4.57L14.16 5.45L13.70 6.47L13.08 7.33L12.95 8.00L13.08 8.67L13.70 9.53L14.16 10.55L13.93 11.42L13.29 12.06L12.17 12.17L11.12 12.07L10.47 12.29L9.96 12.74L9.53 13.70L8.87 14.61L8.00 14.85L7.13 14.61L6.47 13.70L6.04 12.74L5.53 12.29L4.88 12.07L3.83 12.17L2.71 12.06L2.07 11.43L1.84 10.55L2.30 9.53L2.92 8.67L3.05 8.00L2.92 7.33L2.30 6.47L1.84 5.45L2.07 4.57L2.71 3.94L3.83 3.83L4.88 3.93L5.52 3.71L6.04 3.26L6.47 2.30L7.13 1.39z" stroke="#787b86" stroke-width="1.0" stroke-linecap="round" stroke-linejoin="round"/><circle cx="8" cy="8" r="2.1" stroke="#787b86" stroke-width="1.0" stroke-linecap="round" stroke-linejoin="round"/><path d="M15.5 12.5V15.5H12.5z" fill="#787b86"/></svg>
<div style="left:358px;top:800px;width:722px;height:28px;background:#f7f8fa;"></div>
<div style="left:358px;top:800px;width:44px;height:28px;background:#ecedf1;"></div>
<div style="left:358px;top:799px;width:722px;height:1px;background:#f3f4f6;"></div>
<div style="left:358px;top:828px;width:722px;height:117px;background:#fff;"></div>
<svg style="left:405.5px;top:804.5px;" width="19" height="19" viewBox="0 0 16 16" fill="none"><rect x="1.8" y="2.8" width="12.4" height="10.4" rx="1.8" stroke="#84878f" stroke-width="1.0" stroke-linecap="round" stroke-linejoin="round"/><path d="M5.8 2.8V13.2" stroke="#84878f" stroke-width="1.0" stroke-linecap="round" stroke-linejoin="round"/></svg>
<span class="t m" style="top:805.5px;font-size:16px;line-height:21px;color:#0d0e11;left:431px;letter-spacing:-0.67px;">actor.actor_id</span>
<svg style="left:573px;top:807px;" width="14" height="14" viewBox="0 0 16 16" fill="none"><path d="M8 3.500 10.400 6.800H5.600zM8 12.500 5.600 9.200h4.800z" fill="#6c707e"/></svg>
<svg style="left:598.5px;top:804.5px;" width="19" height="19" viewBox="0 0 16 16" fill="none"><rect x="1.8" y="2.8" width="12.4" height="10.4" rx="1.8" stroke="#84878f" stroke-width="1.0" stroke-linecap="round" stroke-linejoin="round"/><path d="M5.8 2.8V13.2" stroke="#84878f" stroke-width="1.0" stroke-linecap="round" stroke-linejoin="round"/></svg>
<span class="t m" style="top:805.5px;font-size:16px;line-height:21px;color:#0d0e11;left:621.5px;letter-spacing:-0.63px;">first_name</span>
<span class="t m" style="top:805.5px;font-size:16px;line-height:21px;color:#0d0e11;left:977px;letter-spacing:-0.65px;">last_update</span>
<div style="left:358px;top:828px;width:722px;height:1px;background:#f0f1f4;"></div>
<div style="left:358px;top:855px;width:722px;height:1px;background:#f0f1f4;"></div>
<div style="left:358px;top:881px;width:722px;height:1px;background:#f0f1f4;"></div>
<div style="left:358px;top:908px;width:722px;height:1px;background:#f0f1f4;"></div>
<div style="left:358px;top:935px;width:722px;height:1px;background:#f0f1f4;"></div>
<span class="t m" style="top:833.5px;font-size:16px;line-height:21px;color:#b4b8c4;right:697px;">1</span>
<span class="t m" style="top:833.5px;font-size:16px;line-height:21px;color:#0d0e11;right:491px;">1</span>
<span class="t m" style="top:833.5px;font-size:16px;line-height:21px;color:#0d0e11;left:598px;letter-spacing:-0.66px;">PENELOPE</span>
<span class="t m" style="top:833.5px;font-size:16px;line-height:21px;color:#0d0e11;left:753.5px;letter-spacing:-0.67px;">GUINESS</span>
<span class="t m" style="top:833.5px;font-size:16px;line-height:21px;color:#0d0e11;left:899.5px;letter-spacing:-0.68px;">2006-02-15 04:34:33.</span>
<span class="t m" style="top:860.2px;font-size:16px;line-height:21px;color:#b4b8c4;right:697px;">2</span>
<span class="t m" style="top:860.2px;font-size:16px;line-height:21px;color:#0d0e11;right:491px;">1</span>
<span class="t m" style="top:860.2px;font-size:16px;line-height:21px;color:#0d0e11;left:598px;letter-spacing:-0.66px;">PENELOPE</span>
<span class="t m" style="top:860.2px;font-size:16px;line-height:21px;color:#0d0e11;left:753.5px;letter-spacing:-0.67px;">GUINESS</span>
<span class="t m" style="top:860.2px;font-size:16px;line-height:21px;color:#0d0e11;left:899.5px;letter-spacing:-0.68px;">2006-02-15 04:34:33.</span>
<span class="t m" style="top:886.9px;font-size:16px;line-height:21px;color:#b4b8c4;right:697px;">3</span>
<span class="t m" style="top:886.9px;font-size:16px;line-height:21px;color:#0d0e11;right:491px;">1</span>
<span class="t m" style="top:886.9px;font-size:16px;line-height:21px;color:#0d0e11;left:598px;letter-spacing:-0.66px;">PENELOPE</span>
<span class="t m" style="top:886.9px;font-size:16px;line-height:21px;color:#0d0e11;left:753.5px;letter-spacing:-0.67px;">GUINESS</span>
<span class="t m" style="top:886.9px;font-size:16px;line-height:21px;color:#0d0e11;left:899.5px;letter-spacing:-0.68px;">2006-02-15 04:34:33.</span>
<span class="t m" style="top:913.6px;font-size:16px;line-height:21px;color:#b4b8c4;right:697px;">4</span>
<span class="t m" style="top:913.6px;font-size:16px;line-height:21px;color:#0d0e11;right:491px;">1</span>
<span class="t m" style="top:913.6px;font-size:16px;line-height:21px;color:#0d0e11;left:598px;letter-spacing:-0.66px;">PENELOPE</span>
<span class="t m" style="top:913.6px;font-size:16px;line-height:21px;color:#0d0e11;left:753.5px;letter-spacing:-0.67px;">GUINESS</span>
<span class="t m" style="top:913.6px;font-size:16px;line-height:21px;color:#0d0e11;left:899.5px;letter-spacing:-0.68px;">2006-02-15 04:34:33.</span>
<div style="left:402px;top:800px;width:1px;height:145px;background:#e6e8ee;"></div>
<div style="left:593px;top:800px;width:1px;height:145px;background:#e6e8ee;"></div>
<div style="left:749px;top:800px;width:1px;height:145px;background:#e6e8ee;"></div>
<div style="left:894px;top:800px;width:1px;height:145px;background:#e6e8ee;"></div>
<div style="left:358px;top:936px;width:722px;height:10px;overflow:hidden">
<span class="t m" style="top:4.5px;font-size:16px;line-height:21px;color:#b4b8c4;right:697px;">5</span>
<span class="t m" style="top:4.5px;font-size:16px;line-height:21px;color:#0d0e11;right:491px;">1</span>
<span class="t m" style="top:4.5px;font-size:16px;line-height:21px;color:#0d0e11;left:240px;letter-spacing:-0.66px;">PENELOPE</span>
<span class="t m" style="top:4.5px;font-size:16px;line-height:21px;color:#0d0e11;left:395.5px;letter-spacing:-0.67px;">GUINESS</span>
<span class="t m" style="top:4.5px;font-size:16px;line-height:21px;color:#0d0e11;left:541.5px;letter-spacing:-0.68px;">2006-02-15 04:34:33.</span>
</div>
<div style="left:0px;top:945px;width:1080px;height:35px;background:#f7f8fa;"></div>
<div style="left:0px;top:945px;width:1080px;height:1px;background:#e6e8ee;"></div>
<span class="t s" style="top:952.5px;font-size:16.5px;line-height:21px;color:#7e8089;left:19px;letter-spacing:-0.19px;">Database Consoles</span>
<svg style="left:167.5px;top:955.5px;" width="15" height="15" viewBox="0 0 16 16" fill="none"><path d="M6.2 4.2 10 8 6.2 11.8" stroke="#9da0ab" stroke-width="1.1" stroke-linecap="round" stroke-linejoin="round"/></svg>
<span class="t s" style="top:952.5px;font-size:16.5px;line-height:21px;color:#7e8089;left:189px;letter-spacing:-0.10px;">PostgreSQL</span>
<svg style="left:284.5px;top:955.5px;" width="15" height="15" viewBox="0 0 16 16" fill="none"><path d="M6.2 4.2 10 8 6.2 11.8" stroke="#9da0ab" stroke-width="1.1" stroke-linecap="round" stroke-linejoin="round"/></svg>
<svg style="left:306.5px;top:952px;" width="19" height="19" viewBox="0 0 16 16" fill="none"><path d="M2.200 3.200C3 1.700 5 1.400 6.400 2.200 7.300 1.600 8.700 1.600 9.600 2.200c1.400-.8 3.400-.5 4.200 1 .6 1.200.2 3.400-.8 5-.5.9-1.200 1.300-1.800 1.100-.1 1.600-.3 3.200-1 4.400-.5.9-1.800.8-2.100-.2-.3-1-.3-2.400-.3-3.600-.5.3-1.200.3-1.700 0-.1.600-.700 1-1.400.8C3.200 10.300 1.400 5.200 2.200 3.200z" fill="#3f97d3"/><path d="M5.600 4.600c0 1.400.3 2.800.9 3.800M7.600 4.200c.3 1.200.4 2.600.2 3.800" stroke="#79cdfb" stroke-width="1" stroke-linecap="round" opacity=".9"/><path d="M9.900 3.200c.5 1.600.6 3.800.1 5.600M3.400 4c-.1 1.400.2 3 .8 4.200" stroke="#2c6da3" stroke-width=".7" stroke-linecap="round" opacity=".55"/><path d="M12.200 3.600c.5 1 .4 2.400-.1 3.600" stroke="#6fd3e8" stroke-width="1.100" stroke-linecap="round" opacity=".9"/></svg>
<span class="t s" style="top:952.5px;font-size:16.5px;line-height:21px;color:#7e8089;left:330px;letter-spacing:0.18px;">console [PostgreSQL]</span>
<span class="t s" style="top:952.5px;font-size:16.5px;line-height:21px;color:#7e8089;left:736px;letter-spacing:-0.97px;">4:1</span>
<span class="t s" style="top:952.5px;font-size:16.5px;line-height:21px;color:#7e8089;left:776px;letter-spacing:-1.27px;">LF</span>
<span class="t s" style="top:952.5px;font-size:16.5px;line-height:21px;color:#7e8089;left:813px;letter-spacing:0.31px;">UTF-8</span>
<svg style="left:878.5px;top:953.5px;" width="19" height="19" viewBox="0 0 16 16" fill="none"><path d="M8.600 8.400c0-.8-1.400-.8-1.600.2-.2 1.400 1.400 2.200 2.800 1.600 1.800-.8 2-3 .6-4.200-1.800-1.600-4.800-1-5.800 1.200-1.200 2.600.4 5.400 3.200 6 2.200.4 4.400-.4 5.600-2.200" stroke="#84878f" stroke-width="1.0" stroke-linecap="round" stroke-linejoin="round"/></svg>
<span class="t s" style="top:952.5px;font-size:16.5px;line-height:21px;color:#7e8089;left:917px;letter-spacing:0.14px;">4 spaces</span>
<svg style="left:1003.5px;top:953.5px;" width="19" height="19" viewBox="0 0 16 16" fill="none"><rect x="2" y="7.200" width="9.500" height="6.800" rx="1.500" stroke="#84878f" stroke-width="1.0" stroke-linecap="round" stroke-linejoin="round"/><path d="M9 7.200V5a2.600 2.600 0 0 1 5.200 0V6.200" stroke="#84878f" stroke-width="1.0" stroke-linecap="round" stroke-linejoin="round"/><path d="M6.800 9.800V11.400" stroke="#84878f" stroke-width="1.0" stroke-linecap="round" stroke-linejoin="round"/></svg>
<svg style="left:1040.5px;top:953.5px;" width="19" height="19" viewBox="0 0 16 16" fill="none"><path d="M8 2a3.800 3.800 0 0 0-3.800 3.800V9L2.600 12h10.800L11.800 9V5.800A3.800 3.800 0 0 0 8 2z" stroke="#84878f" stroke-width="1.0" stroke-linecap="round" stroke-linejoin="round"/><path d="M7 14.200h2" stroke="#84878f" stroke-width="1.0" stroke-linecap="round" stroke-linejoin="round"/></svg>
<div class="menu" style="left:103px;top:408.5px;width:293px;height:173.5px;z-index:20">
<span class="t s" style="top:14.5px;font-size:16.5px;line-height:21px;color:#0d0e11;font-weight:700;-webkit-text-stroke:0;left:93px;letter-spacing:0.13px;">Refactor This</span>
<span class="t s" style="top:49px;font-size:15px;line-height:20px;color:#8a8e9b;font-weight:700;-webkit-text-stroke:0;left:24px;letter-spacing:0.48px;">Extract/Introduce</span>
<div style="left:14px;top:71px;width:265px;height:28px;background:#d4e2ff;border-radius:5px;"></div>
<span class="t s" style="top:75.5px;font-size:16.5px;line-height:21px;color:#0d0e11;left:36.5px;">1</span>
<span class="t s" style="top:75.5px;font-size:16.5px;line-height:21px;color:#0d0e11;left:52px;letter-spacing:0.23px;">Introduce Variable...</span>
<span class="t s" style="top:75.5px;font-size:16.5px;line-height:21px;color:#8a8e9b;right:27.5px;"><span class="k">⌥</span><span class="k">⌘</span>V</span>
<span class="t s" style="top:103.5px;font-size:16.5px;line-height:21px;color:#6c707e;left:34.5px;">2</span>
<span class="t s" style="top:103.5px;font-size:16.5px;line-height:21px;color:#0d0e11;left:52px;letter-spacing:0.08px;">Extract Routine...</span>
<span class="t s" style="top:103.5px;font-size:16.5px;line-height:21px;color:#8a8e9b;right:27.5px;"><span class="k">⌥</span><span class="k">⌘</span>M</span>
<div style="left:14px;top:131.5px;width:267px;height:1px;background:#ebecf0;"></div>
<span class="t s" style="top:141.5px;font-size:16.5px;line-height:21px;color:#6c707e;left:33px;">3</span>
<span class="t s" style="top:141.5px;font-size:16.5px;line-height:21px;color:#0d0e11;left:52px;letter-spacing:-0.13px;">Copy File...</span>
<span class="t s" style="top:141.5px;font-size:16.5px;line-height:21px;color:#8a8e9b;right:27.5px;">F5</span>
</div>
<div class="menu" style="left:629px;top:236px;width:378px;height:688px;z-index:20">
<span class="t s" style="top:12.5px;font-size:16.5px;line-height:21px;color:#0d0e11;left:39px;letter-spacing:-0.15px;">Edit</span>
<span class="t s" style="top:12.5px;font-size:16.5px;line-height:21px;color:#92959f;right:12.5px;"><span class="k2">↵</span></span>
<div style="left:14px;top:42px;width:352px;height:1px;background:#ebecf0;"></div>
<svg style="left:13.5px;top:52.7px;" width="19" height="19" viewBox="0 0 16 16" fill="none"><path d="M9.500 2.500H13.500V6.500M13.500 2.500 9 7M6.500 13.500H2.500V9.500M2.500 13.500 7 9" stroke="#b0b2b9" stroke-width="1.0" stroke-linecap="round" stroke-linejoin="round"/></svg>
<span class="t s" style="top:53.5px;font-size:16.5px;line-height:21px;color:#0d0e11;left:39px;letter-spacing:0.05px;">Open in Value Editor</span>
<span class="t s" style="top:53.5px;font-size:16.5px;line-height:21px;color:#92959f;right:12.5px;"><span class="k2">⇧</span><span class="k2">↵</span></span>
<svg style="left:13.5px;top:82.7px;" width="19" height="19" viewBox="0 0 16 16" fill="none"><path d="M9.500 2.500H13.500V6.500M13.500 2.500 9 7M6.500 13.500H2.500V9.500M2.500 13.500 7 9" stroke="#b0b2b9" stroke-width="1.0" stroke-linecap="round" stroke-linejoin="round"/></svg>
<span class="t s" style="top:83.5px;font-size:16.5px;line-height:21px;color:#0d0e11;left:39px;letter-spacing:0.16px;">Show Aggregate View</span>
<svg style="left:13.5px;top:112.7px;" width="19" height="19" viewBox="0 0 16 16" fill="none"><path d="M5.500 2.500 2.500 5.500 5.500 8.500" stroke="#c9ccd6" stroke-width="1.0" stroke-linecap="round" stroke-linejoin="round"/><path d="M2.500 5.500H10a3.700 3.700 0 0 1 0 7.500H5" stroke="#c9ccd6" stroke-width="1.0" stroke-linecap="round" stroke-linejoin="round"/></svg>
<span class="t s" style="top:113.5px;font-size:16.5px;line-height:21px;color:#b4b8c5;left:39px;letter-spacing:0.04px;">Revert Selected</span>
<span class="t s" style="top:113.5px;font-size:16.5px;line-height:21px;color:#c2c4cc;right:12.5px;"><span class="k">⌥</span><span class="k">⌘</span>Z</span>
<span class="t s" style="top:143.5px;font-size:16.5px;line-height:21px;color:#0d0e11;left:39px;letter-spacing:0.06px;">Set Highlighting Language...</span>
<span class="t s" style="top:173.5px;font-size:16.5px;line-height:21px;color:#0d0e11;left:39px;letter-spacing:0.08px;">Change Display Type</span>
<svg style="left:349.5px;top:176.5px;" width="15" height="15" viewBox="0 0 16 16" fill="none"><path d="M6.2 4.2 10 8 6.2 11.8" stroke="#84878f" stroke-width="1.1" stroke-linecap="round" stroke-linejoin="round"/></svg>
<div style="left:14px;top:203px;width:352px;height:1px;background:#ebecf0;"></div>
<span class="t s" style="top:213.5px;font-size:16.5px;line-height:21px;color:#0d0e11;left:39px;letter-spacing:-0.24px;">Set DEFAULT</span>
<span class="t s" style="top:213.5px;font-size:16.5px;line-height:21px;color:#92959f;right:12.5px;"><span class="k">⌥</span><span class="k">⌘</span>D</span>
<div style="left:14px;top:243px;width:352px;height:1px;background:#ebecf0;"></div>
<svg style="left:13.5px;top:253.7px;" width="19" height="19" viewBox="0 0 16 16" fill="none"><rect x="2" y="4" width="9.500" height="10" rx="1.800" stroke="#787b86" stroke-width="1.0" stroke-linecap="round" stroke-linejoin="round"/><path d="M5 2H12.200A1.800 1.800 0 0 1 14 3.800V11.500" stroke="#787b86" stroke-width="1.0" stroke-linecap="round" stroke-linejoin="round"/><path d="M4.600 7.200H9M4.600 9.200H9M4.600 11.200H9" stroke="#787b86" stroke-width="1.0" stroke-linecap="round" stroke-linejoin="round"/></svg>
<span class="t s" style="top:254.5px;font-size:16.5px;line-height:21px;color:#0d0e11;left:39px;letter-spacing:-0.18px;">Copy</span>
<span class="t s" style="top:254.5px;font-size:16.5px;line-height:21px;color:#92959f;right:12.5px;"><span class="k">⌘</span>C</span>
<span class="t s" style="top:284.5px;font-size:16.5px;line-height:21px;color:#0d0e11;left:39px;letter-spacing:-0.01px;">Change Data Extractor (CSV)</span>
<svg style="left:13.5px;top:313.7px;" width="19" height="19" viewBox="0 0 16 16" fill="none"><rect x="2" y="4" width="9.500" height="10" rx="1.800" stroke="#787b86" stroke-width="1.0" stroke-linecap="round" stroke-linejoin="round"/><path d="M5 2H12.200A1.800 1.800 0 0 1 14 3.800V11.500" stroke="#787b86" stroke-width="1.0" stroke-linecap="round" stroke-linejoin="round"/><path d="M4.600 7.200H9M4.600 9.200H9M4.600 11.200H9" stroke="#787b86" stroke-width="1.0" stroke-linecap="round" stroke-linejoin="round"/></svg>
<span class="t s" style="top:314.5px;font-size:16.5px;line-height:21px;color:#0d0e11;left:39px;letter-spacing:0.11px;">Copy Aggregation Result (SUM)</span>
<span class="t s" style="top:314.5px;font-size:16.5px;line-height:21px;color:#92959f;right:12.5px;"><span class="k2">⇧</span><span class="k">⌘</span>C</span>
<svg style="left:13.5px;top:343.7px;" width="19" height="19" viewBox="0 0 16 16" fill="none"><rect x="2.500" y="3" width="11" height="11.200" rx="1.800" stroke="#787b86" stroke-width="1.0" stroke-linecap="round" stroke-linejoin="round"/><rect x="5.500" y="1.600" width="5" height="2.800" rx="1" fill="#fff" stroke="#787b86" stroke-width="1.0" stroke-linecap="round" stroke-linejoin="round"/><path d="M5.200 7.400H10.800M5.200 9.400H10.800M5.200 11.400H10.800" stroke="#787b86" stroke-width="1.0" stroke-linecap="round" stroke-linejoin="round"/></svg>
<span class="t s" style="top:344.5px;font-size:16.5px;line-height:21px;color:#0d0e11;left:39px;letter-spacing:-0.30px;">Paste</span>
<span class="t s" style="top:344.5px;font-size:16.5px;line-height:21px;color:#92959f;right:12.5px;"><span class="k">⌘</span>V</span>
<div style="left:14px;top:374px;width:352px;height:1px;background:#ebecf0;"></div>
<svg style="left:13.5px;top:384.7px;" width="19" height="19" viewBox="0 0 16 16" fill="none"><path d="M8 2.5V13.5M2.5 8H13.5" stroke="#787b86" stroke-width="1.1" stroke-linecap="round" stroke-linejoin="round"/></svg>
<span class="t s" style="top:385.5px;font-size:16.5px;line-height:21px;color:#0d0e11;left:39px;letter-spacing:-0.16px;">Add Row</span>
<span class="t s" style="top:385.5px;font-size:16.5px;line-height:21px;color:#92959f;right:12.5px;"><span class="k">⌘</span>N</span>
<svg style="left:13.5px;top:414.7px;" width="19" height="19" viewBox="0 0 16 16" fill="none"><path d="M2.5 8H13.5" stroke="#787b86" stroke-width="1.1" stroke-linecap="round" stroke-linejoin="round"/></svg>
<span class="t s" style="top:415.5px;font-size:16.5px;line-height:21px;color:#0d0e11;left:39px;letter-spacing:-0.14px;">Delete Row</span>
<span class="t s" style="top:415.5px;font-size:16.5px;line-height:21px;color:#92959f;right:12.5px;"><span class="k">⌘</span><span class="k3">⌫</span></span>
<svg style="left:13.5px;top:444.7px;" width="19" height="19" viewBox="0 0 16 16" fill="none"><rect x="2" y="4" width="9.500" height="10" rx="1.800" stroke="#787b86" stroke-width="1.0" stroke-linecap="round" stroke-linejoin="round"/><path d="M5 2H12.200A1.800 1.800 0 0 1 14 3.800V11.500" stroke="#787b86" stroke-width="1.0" stroke-linecap="round" stroke-linejoin="round"/><path d="M4.600 7.200H9M4.600 9.200H9M4.600 11.200H9" stroke="#787b86" stroke-width="1.0" stroke-linecap="round" stroke-linejoin="round"/></svg>
<span class="t s" style="top:445.5px;font-size:16.5px;line-height:21px;color:#0d0e11;left:39px;letter-spacing:-0.21px;">Clone Row</span>
<span class="t s" style="top:445.5px;font-size:16.5px;line-height:21px;color:#92959f;right:12.5px;"><span class="k">⌘</span>D</span>
<div style="left:14px;top:475px;width:352px;height:1px;background:#ebecf0;"></div>
<span class="t s" style="top:485.5px;font-size:16.5px;line-height:21px;color:#0d0e11;left:39px;letter-spacing:0.07px;">Go To</span>
<svg style="left:349.5px;top:488.5px;" width="15" height="15" viewBox="0 0 16 16" fill="none"><path d="M6.2 4.2 10 8 6.2 11.8" stroke="#84878f" stroke-width="1.1" stroke-linecap="round" stroke-linejoin="round"/></svg>
<span class="t s" style="top:515.5px;font-size:16.5px;line-height:21px;color:#0d0e11;left:39px;letter-spacing:0.04px;">Filter by</span>
<svg style="left:349.5px;top:518.5px;" width="15" height="15" viewBox="0 0 16 16" fill="none"><path d="M6.2 4.2 10 8 6.2 11.8" stroke="#84878f" stroke-width="1.1" stroke-linecap="round" stroke-linejoin="round"/></svg>
<svg style="left:13.5px;top:545.2px;" width="19" height="19" viewBox="0 0 16 16" fill="none"><circle cx="7" cy="7" r="4.6" stroke="#787b86" stroke-width="1.1" stroke-linecap="round" stroke-linejoin="round"/><path d="M10.400 10.400 13.600 13.600" stroke="#787b86" stroke-width="1.1" stroke-linecap="round" stroke-linejoin="round"/></svg>
<span class="t s" style="top:546px;font-size:16.5px;line-height:21px;color:#0d0e11;left:39px;letter-spacing:0.11px;">Full-Text Search...</span>
<span class="t s" style="top:546px;font-size:16.5px;line-height:21px;color:#92959f;right:12.5px;"><span class="k">⌥</span><span class="k2">⇧</span><span class="k">⌘</span>F</span>
<svg style="left:13.5px;top:575.2px;" width="19" height="19" viewBox="0 0 16 16" fill="none"><path d="M8 2V10M4.800 7 8 10.200 11.200 7M2.500 11V13.500H13.500V11" stroke="#787b86" stroke-width="1.0" stroke-linecap="round" stroke-linejoin="round"/></svg>
<span class="t s" style="top:576px;font-size:16.5px;line-height:21px;color:#0d0e11;left:39px;letter-spacing:0.21px;">Export Table to Clipboard</span>
<div style="left:14px;top:605px;width:352px;height:1px;background:#ebecf0;"></div>
<span class="t s" style="top:616.5px;font-size:16.5px;line-height:21px;color:#0d0e11;left:39px;letter-spacing:0.14px;">Switch Session (actor)</span>
<div style="left:14px;top:646px;width:352px;height:1px;background:#ebecf0;"></div>
<span class="t s" style="top:657px;font-size:16.5px;line-height:21px;color:#0d0e11;left:39px;letter-spacing:0.18px;">Quick Documentation</span>
<span class="t s" style="top:657px;font-size:16.5px;line-height:21px;color:#92959f;right:12.5px;">F1</span>
</div>
<div class="badge" style="left:448.2px;top:2.4px;width:55.6px;height:55.6px"></div>
<div class="bnum" style="left:465.71px;top:11px;font-size:37px;">1</div>
<div class="bmask" style="left:467.33px;top:40.34px;width:7.24px;height:4.76px"></div>
<div class="bmask" style="left:478.74px;top:40.34px;width:6.95px;height:4.76px"></div>
<div class="badge" style="left:159.4px;top:65.0px;width:55.6px;height:55.6px"></div>
<div class="bnum" style="left:176.91px;top:73px;font-size:37px;">2</div>
<div class="badge" style="left:999.8px;top:64.8px;width:55.6px;height:55.6px"></div>
<div class="bnum" style="left:1017.31px;top:73px;font-size:37px;">3</div>
<div class="badge" style="left:425.2px;top:220.0px;width:55.6px;height:55.6px"></div>
<div class="bnum" style="left:442.71px;top:229px;font-size:37px;">4</div>
<div class="badge" style="left:555.8px;top:220.2px;width:55.6px;height:55.6px"></div>
<div class="bnum" style="left:573.31px;top:229px;font-size:37px;">5</div>
<div class="badge" style="left:357.2px;top:398.6px;width:55.6px;height:55.6px"></div>
<div class="bnum" style="left:374.71px;top:407px;font-size:37px;">6</div>
<div class="badge" style="left:616.6px;top:398.6px;width:55.6px;height:55.6px"></div>
<div class="bnum" style="left:634.11px;top:407px;font-size:37px;">7</div>
<div class="badge" style="left:159.4px;top:675.4px;width:55.6px;height:55.6px"></div>
<div class="bnum" style="left:176.91px;top:684px;font-size:37px;">8</div>
<div class="badge" style="left:560.4px;top:744.0px;width:55.6px;height:55.6px"></div>
<div class="bnum" style="left:577.91px;top:753px;font-size:37px;">9</div>
<div class="badge" style="left:14.2px;top:921.6px;width:55.6px;height:55.6px"></div>
<div class="bnum" style="left:22.37px;top:930px;font-size:37px;letter-spacing:-1.9px;">10</div>
<div class="bmask" style="left:23.99px;top:959.34px;width:7.24px;height:4.76px"></div>
<div class="bmask" style="left:35.40px;top:959.34px;width:6.95px;height:4.76px"></div>
<div class="badge" style="left:677.4px;top:921.8px;width:55.6px;height:55.6px"></div>
<div class="bnum" style="left:686.62px;top:930px;font-size:37px;letter-spacing:-3.6px;">11</div>
<div class="bmask" style="left:688.24px;top:959.34px;width:7.24px;height:4.76px"></div>
<div class="bmask" style="left:699.65px;top:959.34px;width:6.95px;height:4.76px"></div>
<div class="bmask" style="left:705.22px;top:959.34px;width:7.24px;height:4.76px"></div>
<div class="bmask" style="left:716.62px;top:959.34px;width:6.95px;height:4.76px"></div>
</div>
</body>
</html>
